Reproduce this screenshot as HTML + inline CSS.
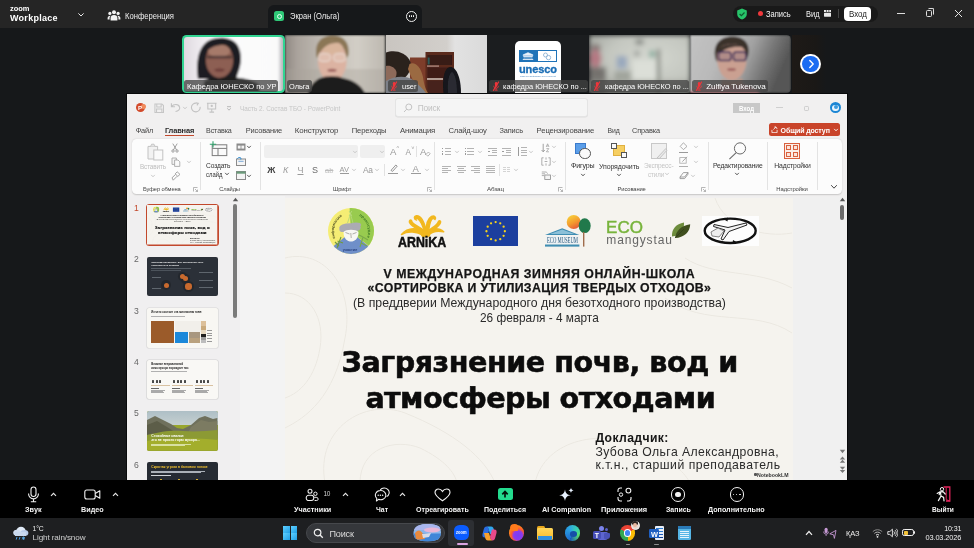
<!DOCTYPE html>
<html lang="ru"><head><meta charset="utf-8"><title>Zoom Workplace</title>
<style>
*{box-sizing:border-box;margin:0;padding:0}
html,body{width:974px;height:548px;overflow:hidden;background:#16181a}
body{position:relative;font-family:"Liberation Sans",sans-serif;color:#fff;font-size:9px}
.t{position:absolute;white-space:nowrap;line-height:1}
.a{position:absolute}
.vid{position:absolute;top:35px;height:58px;overflow:hidden}
.vid i{position:absolute;display:block}
.nm{position:absolute;top:79.5px;height:12.5px;background:rgba(66,66,66,.76);border-radius:2.5px}
#share{position:absolute;left:127px;top:95px;width:720px;height:385px;background:#f1f0f0;overflow:hidden}
#zbar{position:absolute;left:0;top:480px;width:974px;height:37px;background:#000}
#wbar{position:absolute;left:0;top:517px;width:974px;height:31px;background:#1b1f23}
</style></head><body>
<div id="root" style="position:absolute;left:0;top:0;width:974px;height:548px;will-change:transform"><div style="position:absolute;left:0px;top:0px;width:974px;height:28px;background:#252525;"></div>
<div class="t" style="left:10.0px;top:5.0px;font-size:8px;color:#fff;font-weight:bold;transform:scaleX(0.9336);transform-origin:0 50%;">zoom</div>
<div class="t" style="left:10.0px;top:14.0px;font-size:9px;color:#fff;font-weight:bold;letter-spacing:0.268px;">Workplace</div>
<svg style="position:absolute;left:76px;top:11px;" width="10" height="8" viewBox="0 0 10 8"><path d="M2.4 2.4 L5 5 L7.6 2.4" fill="none" stroke="#e8e8e8" stroke-width="1"/></svg>
<svg style="position:absolute;left:107px;top:9px;" width="14" height="13" viewBox="0 0 14 13"><g fill="#f2f2f2"><circle cx="7" cy="3.2" r="2"/><circle cx="2.9" cy="4.4" r="1.6"/><circle cx="11.1" cy="4.4" r="1.6"/><path d="M3.6 11.5 v-2.3 a3.4 3.2 0 0 1 6.8 0 v2.3z"/><path d="M.6 10.6 v-1.6 a2.4 2.4 0 0 1 3-2.2 a4 4 0 0 0-1 3.8z"/><path d="M13.400 10.6 v-1.6 a2.4 2.4 0 0 0-3-2.2 a4 4 0 0 1 1 3.8z"/></g></svg>
<div class="t" style="left:125.0px;top:12.0px;font-size:8.7px;color:#ededed;transform:scaleX(0.8790);transform-origin:0 50%;">Конференция</div>
<div style="position:absolute;left:267.5px;top:4.5px;width:154px;height:23.5px;background:#16181a;border-radius:6px 6px 0 0"></div>
<div style="position:absolute;left:274px;top:11px;width:10px;height:10px;background:#2fc878;border-radius:2.5px"></div>
<div style="position:absolute;left:276.5px;top:13.5px;width:5px;height:5px;background:transparent;border-radius:50%;border:1px solid #e9fff3"></div>
<div class="t" style="left:289.5px;top:12.0px;font-size:8.8px;color:#f0f0f0;transform:scaleX(0.8608);transform-origin:0 50%;">Экран (Ольга)</div>
<div style="position:absolute;left:406px;top:10.5px;width:11px;height:11px;background:transparent;border-radius:50%;border:1.1px solid #f0f0f0"></div>
<div style="position:absolute;left:408.6px;top:15.3px;width:1.4px;height:1.4px;background:#fff;border-radius:50%"></div>
<div style="position:absolute;left:410.8px;top:15.3px;width:1.4px;height:1.4px;background:#fff;border-radius:50%"></div>
<div style="position:absolute;left:413.0px;top:15.3px;width:1.4px;height:1.4px;background:#fff;border-radius:50%"></div>
<div style="position:absolute;left:732.5px;top:5.5px;width:145.5px;height:16px;background:#191919;border-radius:8px"></div>
<svg style="position:absolute;left:735.5px;top:7.5px;" width="12" height="12" viewBox="0 0 12 12"><path d="M6 .6 L10.8 2.4 V6 C10.8 8.8 8.6 10.6 6 11.5 C3.400 10.6 1.2 8.8 1.2 6 V2.4Z" fill="#27c46a"/><path d="M3.600 6 L5.4 7.7 L8.5 4.500" fill="none" stroke="#0f5a30" stroke-width="1.2"/></svg>
<div style="position:absolute;left:758px;top:11px;width:5px;height:5px;background:#f0383c;border-radius:50%"></div>
<div class="t" style="left:765.6px;top:10.0px;font-size:8.7px;color:#f4f4f4;transform:scaleX(0.8687);transform-origin:0 50%;">Запись</div>
<div class="t" style="left:805.5px;top:10.0px;font-size:8.7px;color:#f4f4f4;transform:scaleX(0.8577);transform-origin:0 50%;">Вид</div>
<svg style="position:absolute;left:823.8px;top:9.8px;" width="7.2" height="7.2" viewBox="0 0 8 8"><g fill="#e8e8e8"><rect x="0" y="0" width="2.2" height="2.2"/><rect x="2.9" y="0" width="2.2" height="2.2"/><rect x="5.8" y="0" width="2.2" height="2.2"/><rect x="0" y="3" width="8" height="4.4" rx=".6"/></g></svg>
<div style="position:absolute;left:837.5px;top:9px;width:1px;height:9px;background:#444;"></div>
<div style="position:absolute;left:844px;top:6.5px;width:27px;height:14.5px;background:#fff;border-radius:4px"></div>
<div class="t" style="left:848.6px;top:10.0px;font-size:8.7px;color:#222;transform:scaleX(0.9146);transform-origin:0 50%;">Вход</div>
<div style="position:absolute;left:897px;top:12.5px;width:8px;height:1px;background:#ddd;"></div>
<div style="position:absolute;left:925.5px;top:10px;width:6.5px;height:6.5px;background:transparent;border:1px solid #ddd;border-radius:1.5px"></div>
<div style="position:absolute;left:927.5px;top:8.4px;width:6.5px;height:6.5px;background:transparent;border-top:1px solid #ddd;border-right:1px solid #ddd;border-radius:1.5px"></div>
<svg style="position:absolute;left:954px;top:8.5px;" width="9" height="9" viewBox="0 0 9 9"><path d="M1 1 L8 8 M8 1 L1 8" stroke="#e4e4e4" stroke-width="1"/></svg><div style="position:absolute;left:182px;top:34.6px;width:103px;height:58.6px;background:#31d592;border-radius:4.500px"></div>
<svg style="position:absolute;left:184px;top:36.6px;border-radius:3px;" width="99" height="54.6" viewBox="0 0 99 54.6"><defs><filter id="f1" x="-5%" y="-5%" width="110%" height="110%"><feGaussianBlur stdDeviation="0.8"/></filter></defs><g filter="url(#f1)"><g transform="translate(-2,-2)"><defs><linearGradient id="g1" x1="0" x2="1" y1="0" y2="0"><stop offset="0" stop-color="#ddd7de"/><stop offset=".14" stop-color="#ebe7ec"/><stop offset=".3" stop-color="#f6f4f7"/><stop offset=".55" stop-color="#fbfbfc"/><stop offset=".93" stop-color="#fafafa"/><stop offset=".96" stop-color="#c8c8cc"/><stop offset="1" stop-color="#a8a8ae"/></linearGradient></defs><rect width="103" height="58.600" fill="url(#g1)"/><path d="M16 44 C14 30 15 12 27 5.500 C36 1 50 2 55.500 10 C60.500 18 59.500 30 56 38 L54 44Z" fill="#1f1b20"/><ellipse cx="37.500" cy="25.500" rx="13.600" ry="17.500" fill="#8d5f52"/><ellipse cx="37" cy="16" rx="11" ry="6.500" fill="#a67a6a"/><path d="M23 11 C28 6 44 5 51 12 C45 9 32 9 25 16Z" fill="#1f1b20"/><rect x="25" y="20.800" width="25" height="2.600" fill="#3d2e32" opacity=".75"/><ellipse cx="37.500" cy="35" rx="5" ry="1.500" fill="#6a3a38"/><path d="M20 58.600 L22 46 C28 42.500 48 42 58 43 C68 44.500 75 47 77 50 L78 58.600Z" fill="#1c1a1e"/></g></g></svg>
<div class="nm" style="left:184.4px;width:93.9px"></div><div class="t" style="left:186.8px;top:83.0px;font-size:8.1px;color:#fff;transform:scaleX(0.9289);transform-origin:0 50%;">Кафедра ЮНЕСКО по УР</div>
<svg style="position:absolute;left:285.3px;top:35px;" width="100.3" height="58" viewBox="0 0 100.3 58"><defs><filter id="f2" x="-5%" y="-5%" width="110%" height="110%"><feGaussianBlur stdDeviation="0.8"/></filter></defs><g filter="url(#f2)"><defs><linearGradient id="g2" x1="0" x2="1" y1="0" y2="0"><stop offset="0" stop-color="#8f8882"/><stop offset=".12" stop-color="#aaa39c"/><stop offset=".4" stop-color="#c2bdb5"/><stop offset=".72" stop-color="#d2cec6"/><stop offset="1" stop-color="#bdb8b0"/></linearGradient></defs><rect width="100.300" height="58" fill="url(#g2)"/><rect y="34" width="100.300" height="24" fill="#a9a39b" opacity=".35"/><path d="M31.500 22 C29 8 36 .5 48 .5 C58 .5 65 7 63.500 20 L61 24 L34 24Z" fill="#8b7757"/><ellipse cx="47.300" cy="26" rx="14.300" ry="20.500" fill="#dcb3a2"/><ellipse cx="47" cy="13" rx="11" ry="6" fill="#d9b59c"/><path d="M33 14 C36 5 50 3 58 8 C50 7 40 8 35 18Z" fill="#8b7757"/><rect x="33.500" y="18.500" width="12" height="8" rx="3.600" fill="#e0bfb0" stroke="#eadfd6" stroke-width=".9"/><rect x="48.500" y="18.500" width="12" height="8" rx="3.600" fill="#e0bfb0" stroke="#eadfd6" stroke-width=".9"/><ellipse cx="47" cy="35.300" rx="4.600" ry="1.500" fill="#9c5e5c"/><path d="M23 58 C25 51 29 46 35 43 C40 45 54 45 58 43 C68 45 76 50 80 58Z" fill="#1e1a1a"/><path d="M35 43.500 C38 40.500 56 40.500 58 43.500 L58 47 L35 47Z" fill="#1e1a1a"/></g></svg>
<div class="nm" style="left:286.6px;width:25.8px"></div><div class="t" style="left:289.0px;top:83.0px;font-size:8.1px;color:#fff;transform:scaleX(0.9136);transform-origin:0 50%;">Ольга</div>
<svg style="position:absolute;left:385.6px;top:35px;" width="101.4" height="58" viewBox="0 0 101.4 58"><defs><filter id="f3" x="-5%" y="-5%" width="110%" height="110%"><feGaussianBlur stdDeviation="0.7"/></filter></defs><g filter="url(#f3)"><defs><linearGradient id="g3" x1="0" x2="1" y1="0" y2="0"><stop offset="0" stop-color="#c9c5c0"/><stop offset=".6" stop-color="#d2cfcb"/><stop offset=".68" stop-color="#e2e2e2"/><stop offset="1" stop-color="#dadada"/></linearGradient></defs><rect width="101.400" height="58" fill="url(#g3)"/><rect x="24" y="22.500" width="16" height="36" fill="#7d3c2a"/><rect x="39.500" y="17" width="28.500" height="41" fill="#5a2b1f"/><rect x="41.500" y="20" width="24.500" height="10" fill="#371a14"/><rect x="41.500" y="32.500" width="24.500" height="10.500" fill="#3f1e17"/><rect x="41.500" y="45.500" width="24.500" height="12.500" fill="#46221a"/><rect x="41" y="30.400" width="12" height="1.400" fill="#a8847a"/><rect x="41" y="43.200" width="16" height="1.600" fill="#c8b8b0"/><rect x="41.700" y="22.500" width="2" height="7" fill="#2e5a58"/><path d="M57.500 58 C56 44 58 33 64 32 C70 31.500 75 42 75 58Z" fill="#14151a"/><path d="M62 58 C61 47 63 38 66 37 C69 38 71 47 71 58Z" fill="#2a2c32"/><path d="M0 17.500 C8 14.500 20 16.500 24.500 27 C26 34 22 42 16 44 L0 44Z" fill="#2b211d"/><path d="M0 31 C4 30 9 32 10.500 37 C11 42 8 46 4 47 L0 47Z" fill="#8d6a5a"/><path d="M23.500 29 C29 26 35 32 37 42 C38 50 40 55 42 58 L31 58 C30 50 24 40 22 34Z" fill="#9b6a42"/><path d="M0 46 C8 41 20 40 27 45 C33 50 37 54 40 58 L0 58Z" fill="#7c8088"/></g></svg>
<div class="nm" style="left:387.6px;width:30.5px"></div><svg style="position:absolute;left:390.1px;top:80.7px;" width="8" height="10.5" viewBox="0 0 8 10.5"><path d="M1.200 9.800 L6.800 .6" stroke="#f0343a" stroke-width="1.100" fill="none"/><rect x="2.900" y="1" width="2.400" height="4.800" rx="1.200" fill="#f0343a"/><path d="M1.700 4.800 a2.400 2.400 0 0 0 4.800 0 M4.100 7.200 v1.800 M2.600 9.200 h3" stroke="#f0343a" stroke-width=".8" fill="none"/></svg><div class="t" style="left:401.6px;top:83.0px;font-size:8.1px;color:#fff;transform:scaleX(0.9202);transform-origin:0 50%;">user</div>
<div style="position:absolute;left:487px;top:35px;width:101.5px;height:58px;background:#1b1d1f;"></div>
<div style="position:absolute;left:515.3px;top:41.2px;width:45.5px;height:52px;background:#fff;border-radius:5px 5px 0 0"></div>
<div style="position:absolute;left:519.4px;top:50px;width:18px;height:12px;background:#1f73b8;"></div>
<div style="position:absolute;left:537.4px;top:50px;width:19.4px;height:12px;background:#fff;border:1px solid #1f73b8"></div>
<svg style="position:absolute;left:522.4px;top:52.2px;" width="12" height="8" viewBox="0 0 12 8"><path d="M1 2.800 L6 .6 L11 2.800 V3.600 H1Z M1.600 4.200 H10.400 V5 H1.600Z M2.200 5.400 V6.800 M4 5.400 V6.800 M6 5.400 V6.800 M8 5.400 V6.800 M9.800 5.400 V6.800 M1 7.200 H11 V7.900 H1Z" fill="#e8f1fa" stroke="#e8f1fa" stroke-width=".5"/></svg>
<svg style="position:absolute;left:541px;top:51.8px;" width="12" height="9" viewBox="0 0 12 9"><circle cx="4.500" cy="3" r="2" fill="none" stroke="#8fb3d6" stroke-width=".9"/><circle cx="7.500" cy="5.600" r="2.200" fill="none" stroke="#8fb3d6" stroke-width=".9"/></svg>
<div class="t" style="left:519.0px;top:64.0px;font-size:11px;color:#1a6db5;font-weight:bold;letter-spacing:-0.102px;-webkit-text-stroke:.35px #1a6db5;">unesco</div>
<div class="t" style="left:520.0px;top:75.0px;font-size:2.2px;color:#3a7ab8;letter-spacing:0.059px;">Chair for Sustainable Development</div>
<div class="nm" style="left:489px;width:98.5px"></div><svg style="position:absolute;left:491.5px;top:80.7px;" width="8" height="10.5" viewBox="0 0 8 10.5"><path d="M1.200 9.800 L6.800 .6" stroke="#f0343a" stroke-width="1.100" fill="none"/><rect x="2.900" y="1" width="2.400" height="4.800" rx="1.200" fill="#f0343a"/><path d="M1.700 4.800 a2.400 2.400 0 0 0 4.800 0 M4.100 7.200 v1.800 M2.600 9.200 h3" stroke="#f0343a" stroke-width=".8" fill="none"/></svg><div class="t" style="left:503.0px;top:83.0px;font-size:8.1px;color:#fff;transform:scaleX(0.9174);transform-origin:0 50%;">кафедра ЮНЕСКО по ...</div>
<svg style="position:absolute;left:588.5px;top:35px;" width="101.5" height="58" viewBox="0 0 101.5 58"><defs><filter id="f5" x="-5%" y="-5%" width="110%" height="110%"><feGaussianBlur stdDeviation="2.5"/></filter></defs><g filter="url(#f5)"><defs><radialGradient id="g5" cx=".62" cy=".4" r=".85"><stop offset="0" stop-color="#d4d7d0"/><stop offset=".5" stop-color="#c4c7c0"/><stop offset="1" stop-color="#999c95"/></radialGradient></defs><rect width="101.500" height="58" fill="url(#g5)"/><ellipse cx="6.500" cy="13" rx="5.500" ry="4" fill="#857a78"/><ellipse cx="6.500" cy="23.500" rx="6" ry="9" fill="#b47882"/><rect x="0" y="32" width="17" height="26" fill="#74726e"/><rect x="27.500" y="21" width="10.500" height="12.500" fill="#9aa9bd"/><rect x="25.500" y="36" width="16.500" height="9" fill="#a0a49c"/><rect x="43.500" y="25" width="24.500" height="20" fill="#dcdfd8"/><rect x="46.500" y="4" width="8" height="6" fill="#8c8f8a"/><rect x="45.500" y="16" width="5" height="5" fill="#9a9d98"/><rect x="60.500" y="15.500" width="5.200" height="7" fill="#86ac9c"/><rect x="68" y="14" width="3" height="44" fill="#6d7169"/><rect x="0" y="45" width="101.500" height="13" fill="#9a9d96" opacity=".55"/></g></svg>
<div class="nm" style="left:590.5px;width:98.5px"></div><svg style="position:absolute;left:593.0px;top:80.7px;" width="8" height="10.5" viewBox="0 0 8 10.5"><path d="M1.200 9.800 L6.800 .6" stroke="#f0343a" stroke-width="1.100" fill="none"/><rect x="2.900" y="1" width="2.400" height="4.800" rx="1.200" fill="#f0343a"/><path d="M1.700 4.800 a2.400 2.400 0 0 0 4.800 0 M4.100 7.200 v1.800 M2.600 9.200 h3" stroke="#f0343a" stroke-width=".8" fill="none"/></svg><div class="t" style="left:604.5px;top:83.0px;font-size:8.1px;color:#fff;transform:scaleX(0.9174);transform-origin:0 50%;">кафедра ЮНЕСКО по ...</div>
<svg style="position:absolute;left:690px;top:35px;border-radius:0 4.500px 4.500px 0;" width="101" height="58" viewBox="0 0 101 58"><defs><filter id="f6" x="-5%" y="-5%" width="110%" height="110%"><feGaussianBlur stdDeviation="0.8"/></filter></defs><g filter="url(#f6)"><defs><linearGradient id="g6" x1="0" x2="1" y1="0" y2=".25"><stop offset="0" stop-color="#c3c3c3"/><stop offset=".35" stop-color="#b9b9b9"/><stop offset=".62" stop-color="#a2a2a2"/><stop offset=".82" stop-color="#777"/><stop offset="1" stop-color="#565656"/></linearGradient></defs><rect width="101" height="58" fill="url(#g6)"/><path d="M25.500 24 C22 10 30 1.500 42 1.500 C54 1.500 61 9 58 21 L56 25 L27 27Z" fill="#3a302c"/><path d="M27 22 C27 12 34 9 42 9 C50 9 56.500 13 56.500 23 C57 34 51 45 42 45.500 C33 45 27 35 27 22Z" fill="#caa091"/><path d="M27 16 C31 8 48 7 56 13 C50 10.500 36 11 29 19Z" fill="#3a302c"/><rect x="28.500" y="17" width="12.500" height="8.600" rx="2.600" fill="#b08c88" stroke="#382a58" stroke-width="1.500"/><rect x="43.500" y="17" width="12.500" height="8.600" rx="2.600" fill="#b08c88" stroke="#382a58" stroke-width="1.500"/><ellipse cx="41.500" cy="34.500" rx="4.500" ry="1.300" fill="#9a5a5a"/><path d="M31 58 L32 44 C36 47 48 47 52 43 L53 58Z" fill="#c29684"/><path d="M0 58 L0 56 C10 53 24 51 34 50 C40 52 46 52 52 49 C60 51 66 54 70 58Z" fill="#c98c92"/></g></svg>
<div class="nm" style="left:692.3px;width:75.5px"></div><svg style="position:absolute;left:694.8px;top:80.7px;" width="8" height="10.5" viewBox="0 0 8 10.5"><path d="M1.200 9.800 L6.800 .6" stroke="#f0343a" stroke-width="1.100" fill="none"/><rect x="2.900" y="1" width="2.400" height="4.800" rx="1.200" fill="#f0343a"/><path d="M1.700 4.800 a2.400 2.400 0 0 0 4.800 0 M4.100 7.200 v1.800 M2.600 9.200 h3" stroke="#f0343a" stroke-width=".8" fill="none"/></svg><div class="t" style="left:706.3px;top:83.0px;font-size:8.1px;color:#fff;letter-spacing:-0.116px;">Zulfiya Tukenova</div>
<div style="position:absolute;left:181px;top:92.7px;width:646px;height:1.7px;background:#0b0c0d;"></div>
<div style="position:absolute;left:791.5px;top:35px;width:34px;height:58px;background:linear-gradient(90deg,#1e1a17,#1a1816 70%,#16181a);"></div>
<div style="position:absolute;left:800.3px;top:53.8px;width:20.4px;height:20.4px;background:#fff;border-radius:50%"></div>
<div style="position:absolute;left:802.2px;top:55.7px;width:16.6px;height:16.6px;background:#1b6cf2;border-radius:50%"></div>
<svg style="position:absolute;left:805.5px;top:59px;" width="10" height="10" viewBox="0 0 10 10"><path d="M3.800 1.600 L7.200 5 L3.800 8.400" fill="none" stroke="#fff" stroke-width="1.400" stroke-linecap="round" stroke-linejoin="round"/></svg><div style="position:absolute;left:125.8px;top:93.2px;width:722.5px;height:387px;background:#08090a;"></div>
<div style="position:absolute;left:127px;top:94.3px;width:720.3px;height:386px;background:#f1f0f0;"></div>
<div style="position:absolute;left:136.2px;top:103.2px;width:9px;height:9px;background:#d24a2a;border-radius:50%"></div>
<div style="position:absolute;left:140.5px;top:104.2px;width:5.2px;height:5.2px;background:#f08a5c;border-radius:50%"></div>
<div class="t" style="left:138.0px;top:105.0px;font-size:6px;color:#fff;font-weight:bold;">P</div>
<svg style="position:absolute;left:153.8px;top:102.6px;" width="10.4" height="10.4" viewBox="0 0 9 9"><path d="M.8 .8 H6.800 L8.2 2.2 V8.2 H.8Z M2.4 .8 V3.4 H6.2 V.8 M2.2 8.2 V5.2 H6.8 V8.200" fill="none" stroke="#c6c6c6" stroke-width=".9"/></svg>
<svg style="position:absolute;left:169.8px;top:102.4px;" width="11.5" height="10.35" viewBox="0 0 10 9"><path d="M1.2 1 V4.2 H4.400 M1.4 4 C3 1.600 7.600 1.400 8.4 4.600 C8.8 6.600 7 8 4.8 8.200" fill="none" stroke="#c2c2c2" stroke-width=".95"/></svg>
<svg style="position:absolute;left:181.5px;top:106px;" width="6" height="4" viewBox="0 0 6 4"><path d="M1.2 .9 L3 2.8 L4.8 .9" fill="none" stroke="#c4c4c4" stroke-width=".9"/></svg>
<svg style="position:absolute;left:190.2px;top:102.2px;" width="11.5" height="11.5" viewBox="0 0 10 10"><path d="M5.6 1 A3.8 3.800 0 1 0 8.8 4.200 M5.2 .6 L7.2 1.200 L6 2.900" fill="none" stroke="#c2c2c2" stroke-width=".95"/></svg>
<svg style="position:absolute;left:206px;top:102.2px;" width="11.5" height="11.5" viewBox="0 0 10 10"><path d="M.8 1 H9.2 M1.6 1 V6 H8.400 V1 M5 6 V8.8 M3 8.800 H7" fill="none" stroke="#c2c2c2" stroke-width=".9"/><circle cx="5" cy="3.400" r="1" fill="#c2c2c2"/></svg>
<svg style="position:absolute;left:226px;top:105.5px;" width="6" height="5" viewBox="0 0 6 5"><path d="M1 .7 H5 M1.300 2.300 L3 4.200 L4.700 2.300" fill="none" stroke="#aaa" stroke-width=".8"/></svg>
<div class="t" style="left:239.8px;top:105.0px;font-size:8.1px;color:#c6c6c6;transform:scaleX(0.7890);transform-origin:0 50%;">Часть 2. Состав ТБО  -  PowerPoint</div>
<div style="position:absolute;left:395px;top:98px;width:193px;height:18.5px;background:#f5f5f5;border-radius:3px;border:1px solid #e4e4e4;box-shadow:0 .5px .5px rgba(0,0,0,.08)"></div>
<svg style="position:absolute;left:402.5px;top:102.5px;" width="10" height="10" viewBox="0 0 10 10"><circle cx="5.8" cy="4" r="3" fill="none" stroke="#bdbdbd" stroke-width=".9"/><path d="M3.700 6.200 L1 9" stroke="#bdbdbd" stroke-width=".9"/></svg>
<div class="t" style="left:417.7px;top:104.0px;font-size:8.36px;color:#c2c2c2;letter-spacing:-0.166px;">Поиск</div>
<div style="position:absolute;left:733.3px;top:102.8px;width:26.7px;height:10.2px;background:#c8c8c8;"></div>
<div class="t" style="left:739.0px;top:105.0px;font-size:7.4px;color:#fff;font-weight:bold;transform:scaleX(0.8198);transform-origin:0 50%;">Вход</div>
<div style="position:absolute;left:776px;top:107.1px;width:6.5px;height:0.9px;background:#cfcfcf;"></div>
<div style="position:absolute;left:803.5px;top:105.8px;width:5.5px;height:5.5px;background:#f1f0f0;border:.9px solid #cfcfcf;border-radius:1.2px"></div>
<div style="position:absolute;left:829.8px;top:102.1px;width:11.4px;height:11.4px;background:#1c86d4;border-radius:50%"></div>
<div style="position:absolute;left:832.2px;top:104.5px;width:6.6px;height:6.6px;background:#eaf4fc;border-radius:50%"></div>
<div style="position:absolute;left:834px;top:104.8px;width:4px;height:4px;background:#3a9ade;border-radius:50%"></div>
<div class="t" style="left:135.7px;top:127.0px;font-size:7.37px;color:#444;letter-spacing:-0.173px;">Файл</div>
<div class="t" style="left:206.0px;top:128.0px;font-size:7.15px;color:#444;letter-spacing:-0.129px;">Вставка</div>
<div class="t" style="left:245.7px;top:127.0px;font-size:7.49px;color:#444;letter-spacing:-0.140px;">Рисование</div>
<div class="t" style="left:294.8px;top:127.0px;font-size:7.89px;color:#444;letter-spacing:-0.129px;">Конструктор</div>
<div class="t" style="left:351.8px;top:127.0px;font-size:7.62px;color:#444;letter-spacing:-0.149px;">Переходы</div>
<div class="t" style="left:400.0px;top:127.0px;font-size:7.75px;color:#444;letter-spacing:-0.154px;">Анимация</div>
<div class="t" style="left:448.5px;top:127.0px;font-size:7.61px;color:#444;letter-spacing:-0.144px;">Слайд-шоу</div>
<div class="t" style="left:499.5px;top:127.0px;font-size:7.38px;color:#444;letter-spacing:-0.143px;">Запись</div>
<div class="t" style="left:536.6px;top:127.0px;font-size:7.7px;color:#444;letter-spacing:-0.135px;">Рецензирование</div>
<div class="t" style="left:607.6px;top:128.0px;font-size:6.89px;color:#444;letter-spacing:-0.182px;">Вид</div>
<div class="t" style="left:632.0px;top:127.0px;font-size:7.35px;color:#444;letter-spacing:-0.139px;">Справка</div>
<div class="t" style="left:164.9px;top:127.0px;font-size:7.45px;color:#2a2a2a;font-weight:bold;letter-spacing:-0.150px;">Главная</div>
<div style="position:absolute;left:164.9px;top:135.2px;width:29.4px;height:1.3px;background:#c2482c;"></div>
<div style="position:absolute;left:768.8px;top:123.2px;width:71.2px;height:13.2px;background:#c9442a;border-radius:2.5px"></div>
<svg style="position:absolute;left:771.2px;top:125.8px;" width="7.4" height="7.4" viewBox="0 0 8 8"><path d="M1 4.200 V7.2 H6.6 V4.200 M2.600 3.8 L5.400 1 L6.600 3.200 M5.4 1 L3.600 1.2" fill="none" stroke="#fff" stroke-width=".85"/></svg>
<div class="t" style="left:780.6px;top:127.0px;font-size:7.06px;color:#fff;font-weight:bold;letter-spacing:-0.137px;">Общий доступ</div>
<svg style="position:absolute;left:833.3px;top:128px;" width="6" height="4" viewBox="0 0 6 4"><path d="M1.2 .9 L3 2.8 L4.8 .9" fill="none" stroke="#fff" stroke-width=".9"/></svg>
<div style="position:absolute;left:132.3px;top:138.8px;width:709.5px;height:55.2px;background:#fcfcfc;border-radius:4.5px;box-shadow:0 .5px 1.5px rgba(0,0,0,.18)"></div>
<div style="position:absolute;left:200px;top:142px;width:0.8px;height:48px;background:#e3e3e3;"></div>
<div style="position:absolute;left:259.6px;top:142px;width:0.8px;height:48px;background:#e3e3e3;"></div>
<div style="position:absolute;left:434.2px;top:142px;width:0.8px;height:48px;background:#e3e3e3;"></div>
<div style="position:absolute;left:565px;top:142px;width:0.8px;height:48px;background:#e3e3e3;"></div>
<div style="position:absolute;left:708px;top:142px;width:0.8px;height:48px;background:#e3e3e3;"></div>
<div style="position:absolute;left:767.3px;top:142px;width:0.8px;height:48px;background:#e3e3e3;"></div>
<div style="position:absolute;left:816.7px;top:142px;width:0.8px;height:48px;background:#e3e3e3;"></div>
<svg style="position:absolute;left:146.5px;top:142.5px;" width="17" height="18" viewBox="0 0 17 18"><path d="M1 3.400 H10.600 V16 H1Z" fill="#f2f2f2" stroke="#c2c2c2" stroke-width="1"/><path d="M3.6 3.400 L4.600 1.200 H7 L8 3.400" fill="#e4e4e4" stroke="#c2c2c2" stroke-width=".9"/><rect x="6.800" y="7" width="9" height="10" fill="#fafafa" stroke="#c2c2c2" stroke-width="1"/></svg>
<div class="t" style="left:140.0px;top:164.0px;font-size:6.32px;color:#bdbdbd;letter-spacing:-0.113px;">Вставить</div>
<svg style="position:absolute;left:149.5px;top:173.5px;" width="6" height="4" viewBox="0 0 6 4"><path d="M1.2 .9 L3 2.8 L4.8 .9" fill="none" stroke="#c4c4c4" stroke-width=".9"/></svg>
<svg style="position:absolute;left:171px;top:142.8px;" width="8" height="10" viewBox="0 0 8 10"><path d="M1.8 .6 L5.600 7 M6.200 .6 L2.400 7" stroke="#8a8a8a" stroke-width=".8" fill="none"/><circle cx="2" cy="8" r="1.200" fill="none" stroke="#8a8a8a" stroke-width=".8"/><circle cx="6" cy="8" r="1.200" fill="none" stroke="#8a8a8a" stroke-width=".8"/></svg>
<svg style="position:absolute;left:170.5px;top:156.5px;" width="10" height="10" viewBox="0 0 10 10"><path d="M1 1 H5.400 V7.400 H1Z" fill="#f4f4f4" stroke="#a8a8a8" stroke-width=".9"/><path d="M3.600 3 H7 L8.800 4.800 V9.400 H3.600Z" fill="#fafafa" stroke="#a8a8a8" stroke-width=".9"/></svg>
<svg style="position:absolute;left:185.8px;top:159.8px;" width="6" height="4" viewBox="0 0 6 4"><path d="M1.2 .9 L3 2.8 L4.8 .9" fill="none" stroke="#c4c4c4" stroke-width=".9"/></svg>
<svg style="position:absolute;left:170.5px;top:171px;" width="10" height="10" viewBox="0 0 10 10"><path d="M6.2 .8 L9 3.400 L6.800 5.400 L4.200 2.800Z M4.600 3.400 L1 6.800 L2.200 9.200 L6.200 5.200" fill="none" stroke="#9a9a9a" stroke-width=".9"/></svg>
<div class="t" style="left:143.0px;top:187.0px;font-size:5.73px;color:#444;letter-spacing:-0.103px;">Буфер обмена</div>
<svg style="position:absolute;left:192.5px;top:186.5px;" width="5" height="5" viewBox="0 0 5 5"><path d="M.5 4.500 V.5 H4.500 M2 2 L4.5 4.500 M4.5 2.6 V4.5 H2.600" fill="none" stroke="#999" stroke-width=".7"/></svg>
<svg style="position:absolute;left:208.5px;top:141px;" width="19" height="16" viewBox="0 0 19 16"><rect x="3.200" y="3.800" width="14.6" height="10.800" fill="#fafafa" stroke="#7c7c7c" stroke-width="1"/><path d="M3.200 7.400 H17.800 M9 7.400 V14.600" stroke="#7c7c7c" stroke-width="1" fill="none"/><path d="M4 .2 V6.400 M.8 3.300 H7.200" stroke="#2fa06a" stroke-width="1.1"/></svg>
<div class="t" style="left:206.0px;top:163.0px;font-size:6.61px;color:#333;letter-spacing:-0.120px;">Создать</div>
<div class="t" style="left:206.3px;top:172.0px;font-size:6.6px;color:#333;transform:scaleX(0.8933);transform-origin:0 50%;">слайд</div>
<svg style="position:absolute;left:223.5px;top:172.3px;" width="6" height="4" viewBox="0 0 6 4"><path d="M1.2 .9 L3 2.8 L4.8 .9" fill="none" stroke="#444" stroke-width=".9"/></svg>
<svg style="position:absolute;left:235.5px;top:143px;" width="10" height="8" viewBox="0 0 10 8"><rect x=".5" y=".5" width="9" height="7" fill="#8a8a8a"/><rect x="1.800" y="2.600" width="2.800" height="3" fill="#f4f4f4"/><rect x="5.400" y="2.600" width="2.800" height="3" fill="#f4f4f4"/></svg>
<svg style="position:absolute;left:246.2px;top:145px;" width="6" height="4" viewBox="0 0 6 4"><path d="M1.2 .9 L3 2.8 L4.8 .9" fill="none" stroke="#444" stroke-width=".9"/></svg>
<svg style="position:absolute;left:235.5px;top:156.5px;" width="10" height="9" viewBox="0 0 10 9"><rect x=".5" y="2" width="9" height="6.500" fill="#f4f4f4" stroke="#8a8a8a" stroke-width="1"/><path d="M1.200 1.800 A2.600 2.600 0 0 1 5 1 L4.800 2.600" fill="none" stroke="#2a8ad4" stroke-width=".9"/><rect x="2.400" y="3.800" width="5.200" height="1" fill="#7aa8d8"/></svg>
<svg style="position:absolute;left:235.5px;top:171.2px;" width="10" height="9" viewBox="0 0 10 9"><rect x=".5" y=".5" width="9" height="8" fill="#f4f4f4" stroke="#8a8a8a" stroke-width="1"/><rect x=".5" y=".5" width="9" height="2.200" fill="#6a9a7a"/></svg>
<svg style="position:absolute;left:246.2px;top:173.7px;" width="6" height="4" viewBox="0 0 6 4"><path d="M1.2 .9 L3 2.8 L4.8 .9" fill="none" stroke="#444" stroke-width=".9"/></svg>
<div class="t" style="left:219.3px;top:187.0px;font-size:5.73px;color:#444;letter-spacing:-0.126px;">Слайды</div>
<div style="position:absolute;left:264.2px;top:145px;width:93.8px;height:12.8px;background:#efefef;border-radius:2px"></div>
<svg style="position:absolute;left:352px;top:149.5px;" width="6" height="4" viewBox="0 0 6 4"><path d="M1.2 .9 L3 2.8 L4.8 .9" fill="none" stroke="#c4c4c4" stroke-width=".9"/></svg>
<div style="position:absolute;left:360.4px;top:145px;width:24.9px;height:12.8px;background:#efefef;border-radius:2px"></div>
<svg style="position:absolute;left:379px;top:149.5px;" width="6" height="4" viewBox="0 0 6 4"><path d="M1.2 .9 L3 2.8 L4.8 .9" fill="none" stroke="#c4c4c4" stroke-width=".9"/></svg>
<div class="t" style="left:390.0px;top:147.0px;font-size:9.6px;color:#9a9a9a;">A</div>
<div class="t" style="left:396.5px;top:146.0px;font-size:5.5px;color:#9a9a9a;">^</div>
<div class="t" style="left:405.4px;top:149.0px;font-size:8.2px;color:#9a9a9a;">A</div>
<div class="t" style="left:411.2px;top:146.0px;font-size:5.5px;color:#9a9a9a;">˅</div>
<div style="position:absolute;left:416px;top:146px;width:0.7px;height:11px;background:#e2e2e2;"></div>
<div class="t" style="left:420.0px;top:147.0px;font-size:9.6px;color:#9a9a9a;">A</div>
<svg style="position:absolute;left:425px;top:151px;" width="6" height="6" viewBox="0 0 6 6"><path d="M1 3.400 L3.400 1 L5.200 2.800 L2.800 5.200Z" fill="#fafafa" stroke="#9a9a9a" stroke-width=".7"/></svg>
<div class="t" style="left:267.3px;top:166.0px;font-size:9px;color:#444;font-weight:bold;letter-spacing:-0.134px;">Ж</div>
<div class="t" style="left:283.0px;top:166.0px;font-size:9px;color:#9a9a9a;font-style:italic;">К</div>
<div class="t" style="left:297.5px;top:166.0px;font-size:9px;color:#9a9a9a;text-decoration:underline;">Ч</div>
<div class="t" style="left:312.0px;top:166.0px;font-size:9px;color:#6a6a6a;">S</div>
<div class="t" style="left:325.0px;top:167.0px;font-size:7.5px;color:#bdbdbd;text-decoration:line-through;">ab</div>
<div class="t" style="left:339.5px;top:166.0px;font-size:7.5px;color:#9a9a9a;letter-spacing:0.051px;">AV</div>
<div style="position:absolute;left:339.5px;top:173px;width:9.5px;height:0.8px;background:#9a9a9a;"></div>
<svg style="position:absolute;left:351px;top:168px;" width="6" height="4" viewBox="0 0 6 4"><path d="M1.2 .9 L3 2.8 L4.8 .9" fill="none" stroke="#c4c4c4" stroke-width=".9"/></svg>
<div class="t" style="left:363.0px;top:166.0px;font-size:8.42px;color:#9a9a9a;letter-spacing:-0.299px;">Aa</div>
<svg style="position:absolute;left:374px;top:168px;" width="6" height="4" viewBox="0 0 6 4"><path d="M1.2 .9 L3 2.8 L4.8 .9" fill="none" stroke="#c4c4c4" stroke-width=".9"/></svg>
<div style="position:absolute;left:384.4px;top:164px;width:0.7px;height:12px;background:#e2e2e2;"></div>
<svg style="position:absolute;left:388.5px;top:164px;" width="9" height="8" viewBox="0 0 9 8"><path d="M2 6.400 L6.800 1 L8.200 2.200 L3.600 7.400Z" fill="none" stroke="#8a8a8a" stroke-width=".9"/></svg>
<div style="position:absolute;left:388.2px;top:173px;width:9.5px;height:1.3px;background:#9a9a9a;"></div>
<svg style="position:absolute;left:400.4px;top:168px;" width="6" height="4" viewBox="0 0 6 4"><path d="M1.2 .9 L3 2.8 L4.8 .9" fill="none" stroke="#c4c4c4" stroke-width=".9"/></svg>
<div class="t" style="left:412.5px;top:164.0px;font-size:9.5px;color:#9a9a9a;">A</div>
<div style="position:absolute;left:411.2px;top:173px;width:9.5px;height:1.3px;background:#9a9a9a;"></div>
<svg style="position:absolute;left:423.5px;top:168px;" width="6" height="4" viewBox="0 0 6 4"><path d="M1.2 .9 L3 2.8 L4.8 .9" fill="none" stroke="#c4c4c4" stroke-width=".9"/></svg>
<div class="t" style="left:333.0px;top:187.0px;font-size:5.79px;color:#444;letter-spacing:-0.137px;">Шрифт</div>
<svg style="position:absolute;left:427.2px;top:186.5px;" width="5" height="5" viewBox="0 0 5 5"><path d="M.5 4.500 V.5 H4.500 M2 2 L4.5 4.500 M4.5 2.6 V4.5 H2.600" fill="none" stroke="#999" stroke-width=".7"/></svg>
<div style="position:absolute;left:441.8px;top:147.8px;width:1.3px;height:1.2px;background:#9a9a9a;"></div>
<div style="position:absolute;left:444.6px;top:147.9px;width:6.4px;height:1px;background:#b4b4b4;"></div>
<div style="position:absolute;left:441.8px;top:150.60000000000002px;width:1.3px;height:1.2px;background:#9a9a9a;"></div>
<div style="position:absolute;left:444.6px;top:150.70000000000002px;width:6.4px;height:1px;background:#b4b4b4;"></div>
<div style="position:absolute;left:441.8px;top:153.4px;width:1.3px;height:1.2px;background:#9a9a9a;"></div>
<div style="position:absolute;left:444.6px;top:153.5px;width:6.4px;height:1px;background:#b4b4b4;"></div>
<div style="position:absolute;left:464.5px;top:147.8px;width:1.3px;height:1.2px;background:#9a9a9a;"></div>
<div style="position:absolute;left:467.3px;top:147.9px;width:6.4px;height:1px;background:#b4b4b4;"></div>
<div style="position:absolute;left:464.5px;top:150.60000000000002px;width:1.3px;height:1.2px;background:#9a9a9a;"></div>
<div style="position:absolute;left:467.3px;top:150.70000000000002px;width:6.4px;height:1px;background:#b4b4b4;"></div>
<div style="position:absolute;left:464.5px;top:153.4px;width:1.3px;height:1.2px;background:#9a9a9a;"></div>
<div style="position:absolute;left:467.3px;top:153.5px;width:6.4px;height:1px;background:#b4b4b4;"></div>
<svg style="position:absolute;left:453.8px;top:149.5px;" width="6" height="4" viewBox="0 0 6 4"><path d="M1.2 .9 L3 2.8 L4.8 .9" fill="none" stroke="#c4c4c4" stroke-width=".9"/></svg>
<svg style="position:absolute;left:477px;top:149.5px;" width="6" height="4" viewBox="0 0 6 4"><path d="M1.2 .9 L3 2.8 L4.8 .9" fill="none" stroke="#c4c4c4" stroke-width=".9"/></svg>
<div style="position:absolute;left:487.5px;top:147.5px;width:9px;height:1px;background:#b4b4b4;"></div>
<div style="position:absolute;left:491.5px;top:150px;width:5px;height:1px;background:#b4b4b4;"></div>
<div style="position:absolute;left:491.5px;top:152.2px;width:5px;height:1px;background:#b4b4b4;"></div>
<div style="position:absolute;left:487.5px;top:154.6px;width:9px;height:1px;background:#b4b4b4;"></div>
<div style="position:absolute;left:487.5px;top:150.5px;width:2.5px;height:1.2px;background:#9a9a9a;"></div>
<div style="position:absolute;left:501.8px;top:147.5px;width:9px;height:1px;background:#b4b4b4;"></div>
<div style="position:absolute;left:505.8px;top:150px;width:5px;height:1px;background:#b4b4b4;"></div>
<div style="position:absolute;left:505.8px;top:152.2px;width:5px;height:1px;background:#b4b4b4;"></div>
<div style="position:absolute;left:501.8px;top:154.6px;width:9px;height:1px;background:#b4b4b4;"></div>
<div style="position:absolute;left:501.8px;top:150.5px;width:2.5px;height:1.2px;background:#9a9a9a;"></div>
<div style="position:absolute;left:517.5px;top:146.8px;width:1px;height:9px;background:#9a9a9a;"></div>
<div style="position:absolute;left:520.5px;top:147.3px;width:6px;height:1px;background:#b4b4b4;"></div>
<div style="position:absolute;left:520.5px;top:149.70000000000002px;width:6px;height:1px;background:#b4b4b4;"></div>
<div style="position:absolute;left:520.5px;top:152.10000000000002px;width:6px;height:1px;background:#b4b4b4;"></div>
<div style="position:absolute;left:520.5px;top:154.5px;width:6px;height:1px;background:#b4b4b4;"></div>
<svg style="position:absolute;left:527.7px;top:149.5px;" width="6" height="4" viewBox="0 0 6 4"><path d="M1.2 .9 L3 2.8 L4.8 .9" fill="none" stroke="#c4c4c4" stroke-width=".9"/></svg>
<svg style="position:absolute;left:540.5px;top:142.5px;" width="9" height="10" viewBox="0 0 9 10"><path d="M2.200 .8 V8.600 M.6 7 L2.200 8.800 L3.800 7" fill="none" stroke="#8a8a8a" stroke-width=".8"/><path d="M5.200 4 L6.600 .8 L8 4 M5.800 3 H7.400 M5.400 5.600 H7.800 L5.400 8.800 H8" fill="none" stroke="#9a9a9a" stroke-width=".7"/></svg>
<svg style="position:absolute;left:551.4px;top:145px;" width="6" height="4" viewBox="0 0 6 4"><path d="M1.2 .9 L3 2.8 L4.8 .9" fill="none" stroke="#c4c4c4" stroke-width=".9"/></svg>
<svg style="position:absolute;left:540.5px;top:156.5px;" width="10" height="9" viewBox="0 0 10 9"><path d="M2.600 .8 H.8 V8.200 H2.600 M7.400 .8 H9.200 V8.200 H7.400 M5 .4 V2.600 M5 6.400 V8.600 M3.600 4.500 H6.400" fill="none" stroke="#9a9a9a" stroke-width=".8"/></svg>
<svg style="position:absolute;left:551.4px;top:159.5px;" width="6" height="4" viewBox="0 0 6 4"><path d="M1.2 .9 L3 2.8 L4.8 .9" fill="none" stroke="#c4c4c4" stroke-width=".9"/></svg>
<svg style="position:absolute;left:540.5px;top:171px;" width="10" height="9" viewBox="0 0 10 9"><path d="M.8 1 H5.200 L6.800 2.600 M.8 2.800 H4 M.8 4.600 H3" stroke="#9a9a9a" stroke-width=".8" fill="none"/><rect x="3.800" y="4" width="5.600" height="4.400" fill="#f4f4f4" stroke="#8a8a8a" stroke-width=".8"/></svg>
<svg style="position:absolute;left:551.4px;top:174px;" width="6" height="4" viewBox="0 0 6 4"><path d="M1.2 .9 L3 2.8 L4.8 .9" fill="none" stroke="#c4c4c4" stroke-width=".9"/></svg>
<div style="position:absolute;left:441.8px;top:165.8px;width:9px;height:1px;background:#b4b4b4;"></div><div style="position:absolute;left:441.8px;top:168.0px;width:6px;height:1px;background:#b4b4b4;"></div><div style="position:absolute;left:441.8px;top:170.20000000000002px;width:9px;height:1px;background:#b4b4b4;"></div><div style="position:absolute;left:441.8px;top:172.4px;width:6px;height:1px;background:#b4b4b4;"></div>
<div style="position:absolute;left:456.5px;top:165.8px;width:9px;height:1px;background:#b4b4b4;"></div><div style="position:absolute;left:458.0px;top:168.0px;width:6px;height:1px;background:#b4b4b4;"></div><div style="position:absolute;left:456.5px;top:170.20000000000002px;width:9px;height:1px;background:#b4b4b4;"></div><div style="position:absolute;left:458.0px;top:172.4px;width:6px;height:1px;background:#b4b4b4;"></div>
<div style="position:absolute;left:471.3px;top:165.8px;width:9px;height:1px;background:#b4b4b4;"></div><div style="position:absolute;left:474.3px;top:168.0px;width:6px;height:1px;background:#b4b4b4;"></div><div style="position:absolute;left:471.3px;top:170.20000000000002px;width:9px;height:1px;background:#b4b4b4;"></div><div style="position:absolute;left:474.3px;top:172.4px;width:6px;height:1px;background:#b4b4b4;"></div>
<div style="position:absolute;left:486.1px;top:165.8px;width:9px;height:1px;background:#b4b4b4;"></div><div style="position:absolute;left:486.1px;top:168.0px;width:9px;height:1px;background:#b4b4b4;"></div><div style="position:absolute;left:486.1px;top:170.20000000000002px;width:9px;height:1px;background:#b4b4b4;"></div><div style="position:absolute;left:486.1px;top:172.4px;width:9px;height:1px;background:#b4b4b4;"></div>
<div style="position:absolute;left:498.6px;top:164px;width:0.7px;height:12px;background:#e2e2e2;"></div>
<div style="position:absolute;left:502.5px;top:166.5px;width:3.4px;height:1px;background:#d4d4d4;"></div>
<div style="position:absolute;left:507px;top:166.5px;width:3.4px;height:1px;background:#d4d4d4;"></div>
<div style="position:absolute;left:502.5px;top:168.9px;width:3.4px;height:1px;background:#d4d4d4;"></div>
<div style="position:absolute;left:507px;top:168.9px;width:3.4px;height:1px;background:#d4d4d4;"></div>
<div style="position:absolute;left:502.5px;top:171.3px;width:3.4px;height:1px;background:#d4d4d4;"></div>
<div style="position:absolute;left:507px;top:171.3px;width:3.4px;height:1px;background:#d4d4d4;"></div>
<svg style="position:absolute;left:512.6px;top:168px;" width="6" height="4" viewBox="0 0 6 4"><path d="M1.2 .9 L3 2.8 L4.8 .9" fill="none" stroke="#c4c4c4" stroke-width=".9"/></svg>
<div class="t" style="left:487.0px;top:186.0px;font-size:6.24px;color:#444;letter-spacing:-0.126px;">Абзац</div>
<svg style="position:absolute;left:558.0px;top:186.5px;" width="5" height="5" viewBox="0 0 5 5"><path d="M.5 4.500 V.5 H4.500 M2 2 L4.5 4.500 M4.5 2.6 V4.5 H2.600" fill="none" stroke="#999" stroke-width=".7"/></svg>
<div style="position:absolute;left:574.7px;top:143.4px;width:11px;height:10.2px;background:#5b9ee8;border:.8px solid #3a7acc"></div>
<div style="position:absolute;left:579.4px;top:147.6px;width:11.4px;height:11.4px;background:#fafafa;border-radius:50%;border:1px solid #555"></div>
<div class="t" style="left:571.0px;top:163.0px;font-size:7.08px;color:#333;letter-spacing:-0.141px;">Фигуры</div>
<svg style="position:absolute;left:579.5px;top:172.5px;" width="6" height="4" viewBox="0 0 6 4"><path d="M1.2 .9 L3 2.8 L4.8 .9" fill="none" stroke="#444" stroke-width=".9"/></svg>
<div style="position:absolute;left:613px;top:145px;width:11.6px;height:11px;background:#f6cf62;border:.8px solid #e0b040"></div>
<div style="position:absolute;left:611px;top:143px;width:6px;height:6px;background:#fafafa;border:.9px solid #555"></div>
<div style="position:absolute;left:621px;top:152px;width:6px;height:6px;background:#fafafa;border:.9px solid #555"></div>
<div class="t" style="left:599.0px;top:163.0px;font-size:6.99px;color:#333;letter-spacing:-0.120px;">Упорядочить</div>
<svg style="position:absolute;left:616px;top:172.5px;" width="6" height="4" viewBox="0 0 6 4"><path d="M1.2 .9 L3 2.8 L4.8 .9" fill="none" stroke="#444" stroke-width=".9"/></svg>
<div style="position:absolute;left:650.5px;top:143px;width:16.2px;height:16px;background:#f0f0f0;border:1px solid #c8c8c8"></div>
<svg style="position:absolute;left:655px;top:147px;" width="14" height="13" viewBox="0 0 14 13"><path d="M2 11 L10.800 1.600 L12 3.200 L4.400 11.600Z" fill="#e8e8e8" stroke="#c0c0c0" stroke-width=".9"/></svg>
<div class="t" style="left:644.0px;top:163.0px;font-size:6.55px;color:#c4c4c4;letter-spacing:-0.111px;">Экспресс-</div>
<div class="t" style="left:648.0px;top:172.0px;font-size:6.55px;color:#c4c4c4;transform:scaleX(0.9360);transform-origin:0 50%;">стили</div>
<svg style="position:absolute;left:664px;top:172.3px;" width="6" height="4" viewBox="0 0 6 4"><path d="M1.2 .9 L3 2.8 L4.8 .9" fill="none" stroke="#c4c4c4" stroke-width=".9"/></svg>
<svg style="position:absolute;left:679px;top:142px;" width="9" height="9" viewBox="0 0 9 9"><path d="M4.400 .8 L8 4.400 L4.400 7.600 L1.200 4.400Z" fill="none" stroke="#9a9a9a" stroke-width=".8"/></svg>
<div style="position:absolute;left:679px;top:151.5px;width:9px;height:1.2px;background:#9a9a9a;"></div>
<svg style="position:absolute;left:693.3px;top:145px;" width="6" height="4" viewBox="0 0 6 4"><path d="M1.2 .9 L3 2.8 L4.8 .9" fill="none" stroke="#c4c4c4" stroke-width=".9"/></svg>
<svg style="position:absolute;left:679px;top:156px;" width="9" height="9" viewBox="0 0 9 9"><rect x=".8" y="1.600" width="6.400" height="5.600" fill="none" stroke="#aaa" stroke-width=".8"/><path d="M3.400 5.600 L8 .8" stroke="#9a9a9a" stroke-width=".9"/></svg>
<div style="position:absolute;left:679px;top:165.5px;width:9px;height:1.2px;background:#b0b0b0;"></div>
<svg style="position:absolute;left:693.3px;top:159.5px;" width="6" height="4" viewBox="0 0 6 4"><path d="M1.2 .9 L3 2.8 L4.8 .9" fill="none" stroke="#c4c4c4" stroke-width=".9"/></svg>
<svg style="position:absolute;left:679px;top:171px;" width="10" height="9" viewBox="0 0 10 9"><path d="M1 6 L4.400 1.600 H9 L5.600 6Z M1 6 V7.600 H5.600 L9 3.200 V1.600" fill="none" stroke="#8a8a8a" stroke-width=".8"/></svg>
<svg style="position:absolute;left:689.6px;top:174px;" width="6" height="4" viewBox="0 0 6 4"><path d="M1.2 .9 L3 2.8 L4.8 .9" fill="none" stroke="#c4c4c4" stroke-width=".9"/></svg>
<div class="t" style="left:617.6px;top:187.0px;font-size:5.77px;color:#444;letter-spacing:-0.107px;">Рисование</div>
<svg style="position:absolute;left:700.5px;top:186.5px;" width="5" height="5" viewBox="0 0 5 5"><path d="M.5 4.500 V.5 H4.500 M2 2 L4.5 4.500 M4.5 2.6 V4.5 H2.600" fill="none" stroke="#999" stroke-width=".7"/></svg>
<svg style="position:absolute;left:727px;top:140.5px;" width="21" height="20" viewBox="0 0 21 20"><circle cx="13" cy="7.400" r="5.600" fill="none" stroke="#6a6a6a" stroke-width="1"/><path d="M9.200 11.600 L2.400 18.200" stroke="#6a6a6a" stroke-width="1.100"/></svg>
<div class="t" style="left:713.0px;top:163.0px;font-size:6.73px;color:#333;letter-spacing:-0.113px;">Редактирование</div>
<svg style="position:absolute;left:734px;top:171.5px;" width="6" height="4" viewBox="0 0 6 4"><path d="M1.2 .9 L3 2.8 L4.8 .9" fill="none" stroke="#444" stroke-width=".9"/></svg>
<div style="position:absolute;left:784px;top:143px;width:16.4px;height:15.8px;background:#fbeee8;border:1.1px solid #d9613f"></div>
<div style="position:absolute;left:786.4px;top:145.3px;width:4.8px;height:4.6px;background:#fbe3da;border:1px solid #d9613f"></div>
<div style="position:absolute;left:793.3px;top:145.3px;width:4.8px;height:4.6px;background:#fbe3da;border:1px solid #d9613f"></div>
<div style="position:absolute;left:786.4px;top:152px;width:4.8px;height:4.6px;background:#fbe3da;border:1px solid #d9613f"></div>
<div style="position:absolute;left:793.3px;top:152px;width:4.8px;height:4.6px;background:#fbe3da;border:1px solid #d9613f"></div>
<div class="t" style="left:774.3px;top:163.0px;font-size:6.85px;color:#333;letter-spacing:-0.121px;">Надстройки</div>
<div class="t" style="left:776.3px;top:187.0px;font-size:5.91px;color:#444;letter-spacing:-0.103px;">Надстройки</div>
<svg style="position:absolute;left:830px;top:184px;" width="8" height="6" viewBox="0 0 8 6"><path d="M1.200 1.200 L4 4.200 L6.800 1.200" fill="none" stroke="#444" stroke-width="1"/></svg><div style="position:absolute;left:793px;top:197px;width:54.3px;height:283px;background:#f0f0f0;"></div>
<div style="position:absolute;left:127px;top:196px;width:113px;height:284px;background:#f0eff0;"></div>
<div style="position:absolute;left:240px;top:196px;width:45.3px;height:284px;background:#f3f3f3;"></div>
<div style="position:absolute;left:285.3px;top:197.7px;width:507.3px;height:285.4px;background:#f5f3ee;overflow:hidden"><svg style="position:absolute;left:0;top:0" width="507.3" height="285.4" viewBox="0 0 507.3 285.4"><g fill="none" stroke="#ebe8e1" stroke-width="1"><path d="M0 60 C40 50 70 90 60 140 C50 200 20 220 0 230"/><path d="M0 95 C25 95 40 120 35 150 C30 180 15 195 0 200"/><path d="M40 285 C30 230 80 200 120 215 C170 235 200 260 210 285"/><path d="M75 285 C75 250 110 240 135 250 C160 262 170 275 172 285"/><path d="M400 60 C430 80 470 70 507 90"/><path d="M380 100 C420 130 470 110 507 135"/><path d="M430 0 C440 30 480 40 507 35"/><path d="M250 285 C260 240 320 230 360 250 C390 265 400 275 405 285"/></g></svg>
<svg style="position:absolute;left:43.0px;top:10.4px" width="46" height="46" viewBox="-23 -23 46 46"><defs><clipPath id="lca"><circle r="23"/></clipPath></defs><g clip-path="url(#lca)"><rect x="-24" y="-24" width="48" height="48" fill="#f5ed74"/><path d="M-1.500 -24 L0 1 L30 24 L30 -24Z" fill="#98cb4f"/><path d="M0 1 L-30 25 L30 25Z" fill="#6f8fc9"/><ellipse cx="-1" cy="-3.200" rx="10.800" ry="4.600" fill="#ababb3"/><ellipse cx="5" cy="-6" rx="5" ry="2.400" fill="#ababb3"/><ellipse cx="-8" cy="-1.500" rx="3.600" ry="2.600" fill="#ababb3"/><path d="M-7.500 1 C-7.500 8 -3.500 10.500 0 10.500 C3.500 10.500 7.500 8 7.500 1 C5 -2 -5 -2 -7.500 1Z" fill="#f7f7f3"/><path d="M-.8 2 L-.3 7 L.8 7 L.3 2Z" fill="#b8b8b0"/><path d="M-5.500 1.500 L-1.500 3 M5.500 1.500 L1.500 3" stroke="#9a9a94" stroke-width=".8"/><path d="M-14 17 L-10 6 M-13.500 10 L-8 12 M-12 15 L-16 11" stroke="#6f9a3c" stroke-width="1.100" fill="none"/><path d="M9 16 L12 6 L17 9 M10 12 L16 15 M12 6 L8 4" stroke="#7aa84a" stroke-width="1.100" fill="none"/><path d="M-3.500 -8 L-.5 -17 L2 -8 M-1.800 -20 L.8 -15 M.8 -20 L-1.800 -15" stroke="#b4d878" stroke-width=".9" fill="none"/></g><path id="lp1a" d="M-15.600 7.300 A17.200 17.200 0 0 1 -8.100 -15.200" fill="none"/><path id="lp2a" d="M8.100 -15.200 A17.200 17.200 0 0 1 15.600 7.300" fill="none"/><text font-family="Liberation Sans,sans-serif" font-size="3.600" font-weight="bold" fill="#4f4f22"><textPath href="#lp1a" textLength="25" lengthAdjust="spacingAndGlyphs">информация</textPath></text><text font-family="Liberation Sans,sans-serif" font-size="3.600" font-weight="bold" fill="#3f7a24"><textPath href="#lp2a" textLength="25" lengthAdjust="spacingAndGlyphs">правосудие</textPath></text><text x="-8.300" y="19.600" font-family="Liberation Sans,sans-serif" font-size="3.800" font-weight="bold" fill="#27407e" textLength="14.500" lengthAdjust="spacingAndGlyphs">участие</text></svg>
<svg style="position:absolute;left:114.7px;top:16.3px" width="45" height="24" viewBox="0 0 45 24"><g fill="#f2b81f" stroke="#f2b81f" stroke-width="1.500" stroke-linejoin="round"><path d="M25 19.500 C19 13.500 8 12.500 1.500 20.500 C8 16.500 17 17.500 23.500 21.500Z"/><path d="M26.500 19.500 C31 13.500 39 13.500 43.700 17.800 C38 16.500 32 17.500 28 21.500Z"/><path d="M24 19 C19 15 12 13.500 9.500 8.500 C9 6.500 10.500 5.500 11.500 6.500 C11.500 10.500 19 12 25 17.500Z"/><path d="M27 18.500 C30 14 37 12.500 38.500 7.500 C39.500 6 41 7 40.500 8.500 C39.500 13 32 15.500 28.500 19.500Z"/><path d="M24.500 18.500 C23 12 21 7 17.500 4.500 C16 3.500 15 5 16.500 6 C14 5.500 13.500 2.500 16.500 1.800 C21 1.500 24.500 9 26.500 17.500Z"/><path d="M26.500 18 C26 11 27.500 5 31.500 2.500 C34.500 1.200 36.500 3.500 35 5.500 C34.500 4 32.500 4 31.500 5.500 C29.500 8.500 29 13 28.500 18.500Z"/><ellipse cx="25.600" cy="20.500" rx="4" ry="2.100"/></g></svg>
<div class="t" style="left:112.5px;top:37.0px;font-size:14.8px;color:#111;font-weight:bold;transform:scaleX(0.8375);transform-origin:0 50%;-webkit-text-stroke:.5px #111;">ARNiKA</div>
<div style="position:absolute;left:187.4px;top:18.1px;width:45.3px;height:30.5px;background:#1c3f9e;"></div>
<svg style="position:absolute;left:187.4px;top:18.1px" width="45.3" height="30.5" viewBox="0 0 45.3 30.5"><circle cx="22.65" cy="6.05" r="1.15" fill="#f7d41c"/><circle cx="27.25" cy="7.28" r="1.15" fill="#f7d41c"/><circle cx="30.62" cy="10.65" r="1.15" fill="#f7d41c"/><circle cx="31.85" cy="15.25" r="1.15" fill="#f7d41c"/><circle cx="30.62" cy="19.85" r="1.15" fill="#f7d41c"/><circle cx="27.25" cy="23.22" r="1.15" fill="#f7d41c"/><circle cx="22.65" cy="24.45" r="1.15" fill="#f7d41c"/><circle cx="18.05" cy="23.22" r="1.15" fill="#f7d41c"/><circle cx="14.68" cy="19.85" r="1.15" fill="#f7d41c"/><circle cx="13.45" cy="15.25" r="1.15" fill="#f7d41c"/><circle cx="14.68" cy="10.65" r="1.15" fill="#f7d41c"/><circle cx="18.05" cy="7.28" r="1.15" fill="#f7d41c"/></svg>
<svg style="position:absolute;left:258.7px;top:16.3px" width="50" height="34" viewBox="0 0 50 34"><defs><linearGradient id="suna" x1=".2" y1="0" x2=".7" y2="1"><stop offset="0" stop-color="#f8d23a"/><stop offset=".55" stop-color="#f39a2e"/><stop offset="1" stop-color="#e4573a"/></linearGradient></defs><circle cx="29.700" cy="8" r="7" fill="url(#suna)"/><ellipse cx="40.700" cy="11.700" rx="6" ry="7.400" fill="#21794b"/><rect x="39" y="18" width="1.400" height="14.600" fill="#a06c4c"/><path d="M1 21 L18.200 14.300 L35.400 21Z" fill="#3f8db2"/><path d="M6 20 L18.200 15.600 L30.400 20Z" fill="#8cc0d8"/><rect x="2" y="21.800" width="32.500" height="8.400" fill="#eef2f4"/><text x="3" y="29.200" font-family="Liberation Serif,serif" font-size="8.600" fill="#23557a" textLength="31" lengthAdjust="spacingAndGlyphs">ECO MUSEUM</text><rect x="1" y="30.500" width="34.400" height="2.100" fill="#3f8db2"/></svg>
<div class="t" style="left:320.7px;top:21.0px;font-size:17px;color:#78b43c;letter-spacing:0.080px;-webkit-text-stroke:.45px #78b43c;">ECO</div>
<div class="t" style="left:321.0px;top:36.0px;font-size:12px;color:#666;letter-spacing:0.862px;">mangystau</div>
<svg style="position:absolute;left:385.7px;top:23.3px" width="20" height="18" viewBox="0 0 20 18"><path d="M1 15.500 C.5 8 5 3 13 1.500 C13.500 9 9 15 1 15.500Z" fill="#6d8c3c"/><path d="M4 17 C5 10 10 4.500 19.200 3.200 C19 11 13 16.500 4 17Z" fill="#3f4f1e"/><path d="M4 17 L13 8" stroke="#2c3814" stroke-width=".6"/></svg>
<div style="position:absolute;left:417.2px;top:18.7px;width:56.5px;height:29.6px;background:#fdfdfd;"></div>
<svg style="position:absolute;left:417.2px;top:18.7px" width="56.5" height="29.6" viewBox="0 0 56.5 29.6"><ellipse cx="28.200" cy="14.800" rx="25.500" ry="12.200" fill="none" stroke="#111" stroke-width="2.400"/><path d="M12 8.500 L26 11.500 L44 7 L45 9 L27 15.500 L21 24 L19 23 L23 14 L11.500 10.500Z" fill="#f4f4f4" stroke="#222" stroke-width="1"/><path d="M9 16 L16 12 L22 15 L17 21 L10 20Z" fill="#eee" stroke="#555" stroke-width=".7"/><path d="M22 3.500 L26 1.500 L25.500 5.500Z M34.500 26 L30.500 28 L31 24Z" fill="#111"/></svg>
<div class="t" style="left:98.3px;top:70.0px;font-size:12.3px;color:#151515;font-weight:bold;letter-spacing:0.531px;-webkit-text-stroke:.25px #151515;">V МЕЖДУНАРОДНАЯ ЗИМНЯЯ ОНЛАЙН-ШКОЛА</div>
<div class="t" style="left:82.3px;top:84.0px;font-size:12.3px;color:#151515;font-weight:bold;letter-spacing:0.361px;-webkit-text-stroke:.25px #151515;">«СОРТИРОВКА И УТИЛИЗАЦИЯ ТВЕРДЫХ ОТХОДОВ»</div>
<div class="t" style="left:68.1px;top:99.0px;font-size:12.9px;color:#2a2a2a;transform:scaleX(0.9525);transform-origin:0 50%;">(В преддверии Международного дня безотходного производства)</div>
<div class="t" style="left:194.9px;top:114.0px;font-size:12.9px;color:#2a2a2a;transform:scaleX(0.9172);transform-origin:0 50%;">26 февраля - 4 марта</div>
<div class="t" style="left:56.3px;top:150.0px;font-size:28.6px;color:#0c0c0c;font-weight:bold;font-family:'DejaVu Sans',sans-serif;letter-spacing:-0.470px;-webkit-text-stroke:.55px #0c0c0c;">Загрязнение почв, вод и</div>
<div class="t" style="left:80.1px;top:186.0px;font-size:28.6px;color:#0c0c0c;font-weight:bold;font-family:'DejaVu Sans',sans-serif;letter-spacing:-0.569px;-webkit-text-stroke:.55px #0c0c0c;">атмосферы отходами</div>
<div class="t" style="left:310.1px;top:234.0px;font-size:12.2px;color:#151515;font-weight:bold;letter-spacing:0.380px;">Докладчик:</div>
<div class="t" style="left:310.1px;top:248.0px;font-size:12.2px;color:#2a2a2a;letter-spacing:0.427px;">Зубова Ольга Александровна,</div>
<div class="t" style="left:310.1px;top:261.0px;font-size:12.2px;color:#2a2a2a;letter-spacing:0.509px;">к.т.н., старший преподаватель</div>
<div class="t" style="left:472.2px;top:276.0px;font-size:4.6px;color:#333;font-weight:bold;transform:scaleX(1.1310);transform-origin:0 50%;">NotebookLM</div>
<div style="position:absolute;left:468.7px;top:275.3px;width:2.6px;height:3.2px;background:#555;border-radius:1px"></div></div>
<div class="t" style="left:134.0px;top:204.0px;font-size:8.6px;color:#c2482c;">1</div>
<div class="t" style="left:134.0px;top:255.0px;font-size:8.6px;color:#666;">2</div>
<div class="t" style="left:134.0px;top:307.0px;font-size:8.6px;color:#666;">3</div>
<div class="t" style="left:134.0px;top:358.0px;font-size:8.6px;color:#666;">4</div>
<div class="t" style="left:134.0px;top:409.0px;font-size:8.6px;color:#666;">5</div>
<div class="t" style="left:134.0px;top:461.0px;font-size:8.6px;color:#666;">6</div>
<div style="position:absolute;left:145.6px;top:203.7px;width:73.6px;height:42.7px;background:#f5f3ee;border:2px solid #c2482c;border-radius:3.5px"></div>
<div style="position:absolute;left:147.3px;top:205.3px;width:507.3px;height:285.4px;transform:scale(0.13858);transform-origin:0 0;overflow:hidden;background:#f5f3ee"><svg style="position:absolute;left:0;top:0" width="507.3" height="285.4" viewBox="0 0 507.3 285.4"><g fill="none" stroke="#ebe8e1" stroke-width="1"><path d="M0 60 C40 50 70 90 60 140 C50 200 20 220 0 230"/><path d="M0 95 C25 95 40 120 35 150 C30 180 15 195 0 200"/><path d="M40 285 C30 230 80 200 120 215 C170 235 200 260 210 285"/><path d="M75 285 C75 250 110 240 135 250 C160 262 170 275 172 285"/><path d="M400 60 C430 80 470 70 507 90"/><path d="M380 100 C420 130 470 110 507 135"/><path d="M430 0 C440 30 480 40 507 35"/><path d="M250 285 C260 240 320 230 360 250 C390 265 400 275 405 285"/></g></svg>
<svg style="position:absolute;left:43.0px;top:10.4px" width="46" height="46" viewBox="-23 -23 46 46"><defs><clipPath id="lcb"><circle r="23"/></clipPath></defs><g clip-path="url(#lcb)"><rect x="-24" y="-24" width="48" height="48" fill="#f5ed74"/><path d="M-1.500 -24 L0 1 L30 24 L30 -24Z" fill="#98cb4f"/><path d="M0 1 L-30 25 L30 25Z" fill="#6f8fc9"/><ellipse cx="-1" cy="-3.200" rx="10.800" ry="4.600" fill="#ababb3"/><ellipse cx="5" cy="-6" rx="5" ry="2.400" fill="#ababb3"/><ellipse cx="-8" cy="-1.500" rx="3.600" ry="2.600" fill="#ababb3"/><path d="M-7.500 1 C-7.500 8 -3.500 10.500 0 10.500 C3.500 10.500 7.500 8 7.500 1 C5 -2 -5 -2 -7.500 1Z" fill="#f7f7f3"/><path d="M-.8 2 L-.3 7 L.8 7 L.3 2Z" fill="#b8b8b0"/><path d="M-5.500 1.500 L-1.500 3 M5.500 1.500 L1.500 3" stroke="#9a9a94" stroke-width=".8"/><path d="M-14 17 L-10 6 M-13.500 10 L-8 12 M-12 15 L-16 11" stroke="#6f9a3c" stroke-width="1.100" fill="none"/><path d="M9 16 L12 6 L17 9 M10 12 L16 15 M12 6 L8 4" stroke="#7aa84a" stroke-width="1.100" fill="none"/><path d="M-3.500 -8 L-.5 -17 L2 -8 M-1.800 -20 L.8 -15 M.8 -20 L-1.800 -15" stroke="#b4d878" stroke-width=".9" fill="none"/></g><path id="lp1b" d="M-15.600 7.300 A17.200 17.200 0 0 1 -8.100 -15.200" fill="none"/><path id="lp2b" d="M8.100 -15.200 A17.200 17.200 0 0 1 15.600 7.300" fill="none"/><text font-family="Liberation Sans,sans-serif" font-size="3.600" font-weight="bold" fill="#4f4f22"><textPath href="#lp1b" textLength="25" lengthAdjust="spacingAndGlyphs">информация</textPath></text><text font-family="Liberation Sans,sans-serif" font-size="3.600" font-weight="bold" fill="#3f7a24"><textPath href="#lp2b" textLength="25" lengthAdjust="spacingAndGlyphs">правосудие</textPath></text><text x="-8.300" y="19.600" font-family="Liberation Sans,sans-serif" font-size="3.800" font-weight="bold" fill="#27407e" textLength="14.500" lengthAdjust="spacingAndGlyphs">участие</text></svg>
<svg style="position:absolute;left:114.7px;top:16.3px" width="45" height="24" viewBox="0 0 45 24"><g fill="#f2b81f" stroke="#f2b81f" stroke-width="1.500" stroke-linejoin="round"><path d="M25 19.500 C19 13.500 8 12.500 1.500 20.500 C8 16.500 17 17.500 23.500 21.500Z"/><path d="M26.500 19.500 C31 13.500 39 13.500 43.700 17.800 C38 16.500 32 17.500 28 21.500Z"/><path d="M24 19 C19 15 12 13.500 9.500 8.500 C9 6.500 10.500 5.500 11.500 6.500 C11.500 10.500 19 12 25 17.500Z"/><path d="M27 18.500 C30 14 37 12.500 38.500 7.500 C39.500 6 41 7 40.500 8.500 C39.500 13 32 15.500 28.500 19.500Z"/><path d="M24.500 18.500 C23 12 21 7 17.500 4.500 C16 3.500 15 5 16.500 6 C14 5.500 13.500 2.500 16.500 1.800 C21 1.500 24.500 9 26.500 17.500Z"/><path d="M26.500 18 C26 11 27.500 5 31.500 2.500 C34.500 1.200 36.500 3.500 35 5.500 C34.500 4 32.500 4 31.500 5.500 C29.500 8.500 29 13 28.500 18.500Z"/><ellipse cx="25.600" cy="20.500" rx="4" ry="2.100"/></g></svg>
<div class="t" style="left:112.5px;top:37.0px;font-size:14.8px;color:#111;font-weight:bold;transform:scaleX(0.8375);transform-origin:0 50%;-webkit-text-stroke:.5px #111;">ARNiKA</div>
<div style="position:absolute;left:187.4px;top:18.1px;width:45.3px;height:30.5px;background:#1c3f9e;"></div>
<svg style="position:absolute;left:187.4px;top:18.1px" width="45.3" height="30.5" viewBox="0 0 45.3 30.5"><circle cx="22.65" cy="6.05" r="1.15" fill="#f7d41c"/><circle cx="27.25" cy="7.28" r="1.15" fill="#f7d41c"/><circle cx="30.62" cy="10.65" r="1.15" fill="#f7d41c"/><circle cx="31.85" cy="15.25" r="1.15" fill="#f7d41c"/><circle cx="30.62" cy="19.85" r="1.15" fill="#f7d41c"/><circle cx="27.25" cy="23.22" r="1.15" fill="#f7d41c"/><circle cx="22.65" cy="24.45" r="1.15" fill="#f7d41c"/><circle cx="18.05" cy="23.22" r="1.15" fill="#f7d41c"/><circle cx="14.68" cy="19.85" r="1.15" fill="#f7d41c"/><circle cx="13.45" cy="15.25" r="1.15" fill="#f7d41c"/><circle cx="14.68" cy="10.65" r="1.15" fill="#f7d41c"/><circle cx="18.05" cy="7.28" r="1.15" fill="#f7d41c"/></svg>
<svg style="position:absolute;left:258.7px;top:16.3px" width="50" height="34" viewBox="0 0 50 34"><defs><linearGradient id="sunb" x1=".2" y1="0" x2=".7" y2="1"><stop offset="0" stop-color="#f8d23a"/><stop offset=".55" stop-color="#f39a2e"/><stop offset="1" stop-color="#e4573a"/></linearGradient></defs><circle cx="29.700" cy="8" r="7" fill="url(#sunb)"/><ellipse cx="40.700" cy="11.700" rx="6" ry="7.400" fill="#21794b"/><rect x="39" y="18" width="1.400" height="14.600" fill="#a06c4c"/><path d="M1 21 L18.200 14.300 L35.400 21Z" fill="#3f8db2"/><path d="M6 20 L18.200 15.600 L30.400 20Z" fill="#8cc0d8"/><rect x="2" y="21.800" width="32.500" height="8.400" fill="#eef2f4"/><text x="3" y="29.200" font-family="Liberation Serif,serif" font-size="8.600" fill="#23557a" textLength="31" lengthAdjust="spacingAndGlyphs">ECO MUSEUM</text><rect x="1" y="30.500" width="34.400" height="2.100" fill="#3f8db2"/></svg>
<div class="t" style="left:320.7px;top:21.0px;font-size:17px;color:#78b43c;letter-spacing:0.080px;-webkit-text-stroke:.45px #78b43c;">ECO</div>
<div class="t" style="left:321.0px;top:36.0px;font-size:12px;color:#666;letter-spacing:0.862px;">mangystau</div>
<svg style="position:absolute;left:385.7px;top:23.3px" width="20" height="18" viewBox="0 0 20 18"><path d="M1 15.500 C.5 8 5 3 13 1.500 C13.500 9 9 15 1 15.500Z" fill="#6d8c3c"/><path d="M4 17 C5 10 10 4.500 19.200 3.200 C19 11 13 16.500 4 17Z" fill="#3f4f1e"/><path d="M4 17 L13 8" stroke="#2c3814" stroke-width=".6"/></svg>
<div style="position:absolute;left:417.2px;top:18.7px;width:56.5px;height:29.6px;background:#fdfdfd;"></div>
<svg style="position:absolute;left:417.2px;top:18.7px" width="56.5" height="29.6" viewBox="0 0 56.5 29.6"><ellipse cx="28.200" cy="14.800" rx="25.500" ry="12.200" fill="none" stroke="#111" stroke-width="2.400"/><path d="M12 8.500 L26 11.500 L44 7 L45 9 L27 15.500 L21 24 L19 23 L23 14 L11.500 10.500Z" fill="#f4f4f4" stroke="#222" stroke-width="1"/><path d="M9 16 L16 12 L22 15 L17 21 L10 20Z" fill="#eee" stroke="#555" stroke-width=".7"/><path d="M22 3.500 L26 1.500 L25.500 5.500Z M34.500 26 L30.500 28 L31 24Z" fill="#111"/></svg>
<div class="t" style="left:98.3px;top:70.0px;font-size:12.3px;color:#151515;font-weight:bold;letter-spacing:0.531px;-webkit-text-stroke:.25px #151515;">V МЕЖДУНАРОДНАЯ ЗИМНЯЯ ОНЛАЙН-ШКОЛА</div>
<div class="t" style="left:82.3px;top:84.0px;font-size:12.3px;color:#151515;font-weight:bold;letter-spacing:0.361px;-webkit-text-stroke:.25px #151515;">«СОРТИРОВКА И УТИЛИЗАЦИЯ ТВЕРДЫХ ОТХОДОВ»</div>
<div class="t" style="left:68.1px;top:99.0px;font-size:12.9px;color:#2a2a2a;transform:scaleX(0.9525);transform-origin:0 50%;">(В преддверии Международного дня безотходного производства)</div>
<div class="t" style="left:194.9px;top:114.0px;font-size:12.9px;color:#2a2a2a;transform:scaleX(0.9172);transform-origin:0 50%;">26 февраля - 4 марта</div>
<div class="t" style="left:56.3px;top:150.0px;font-size:28.6px;color:#0c0c0c;font-weight:bold;font-family:'DejaVu Sans',sans-serif;letter-spacing:-0.470px;-webkit-text-stroke:.55px #0c0c0c;">Загрязнение почв, вод и</div>
<div class="t" style="left:80.1px;top:186.0px;font-size:28.6px;color:#0c0c0c;font-weight:bold;font-family:'DejaVu Sans',sans-serif;letter-spacing:-0.569px;-webkit-text-stroke:.55px #0c0c0c;">атмосферы отходами</div>
<div class="t" style="left:310.1px;top:234.0px;font-size:12.2px;color:#151515;font-weight:bold;letter-spacing:0.380px;">Докладчик:</div>
<div class="t" style="left:310.1px;top:248.0px;font-size:12.2px;color:#2a2a2a;letter-spacing:0.427px;">Зубова Ольга Александровна,</div>
<div class="t" style="left:310.1px;top:261.0px;font-size:12.2px;color:#2a2a2a;letter-spacing:0.509px;">к.т.н., старший преподаватель</div>
<div class="t" style="left:472.2px;top:276.0px;font-size:4.6px;color:#333;font-weight:bold;transform:scaleX(1.1310);transform-origin:0 50%;">NotebookLM</div>
<div style="position:absolute;left:468.7px;top:275.3px;width:2.6px;height:3.2px;background:#555;border-radius:1px"></div></div>
<div style="position:absolute;left:147.3px;top:256.6px;width:70.3px;height:39.5px;background:#2b3038;overflow:hidden;border-radius:2px;"><div style="position:absolute;left:30.5px;top:15.4px;width:9.4px;height:9.4px;background:#23272d;border-radius:50%"></div><div style="position:absolute;left:33.5px;top:17.6px;width:9.4px;height:9.4px;background:#23272d;border-radius:50%"></div><div style="position:absolute;left:14.2px;top:23.8px;width:9.8px;height:9.8px;background:#23272d;border-radius:50%"></div><div style="position:absolute;left:35.7px;top:24.2px;width:11.0px;height:11.0px;background:#23272d;border-radius:50%"></div><div style="position:absolute;left:32.7px;top:17.6px;width:5.0px;height:5.0px;background:#c96a2e;border-radius:50%"></div><div style="position:absolute;left:35.7px;top:19.8px;width:5.0px;height:5.0px;background:#c96a2e;border-radius:50%"></div><div style="position:absolute;left:16.4px;top:26.0px;width:5.4px;height:5.4px;background:#c96a2e;border-radius:50%"></div><div style="position:absolute;left:37.9px;top:26.4px;width:6.6px;height:6.6px;background:#c96a2e;border-radius:50%"></div><div class="t" style="left:4.2px;top:5.0px;font-size:2.5px;color:#f0f0f0;font-weight:bold;">Масштаб проблемы: 500 миллионов тонн</div><div class="t" style="left:4.2px;top:8.0px;font-size:2.5px;color:#f0f0f0;font-weight:bold;">накопленных отходов</div><div style="position:absolute;left:4.2px;top:11.5px;width:40px;height:0.7px;background:#555c64;"></div><div style="position:absolute;left:4.2px;top:13px;width:30px;height:0.7px;background:#4c535b;"></div><div style="position:absolute;left:4.5px;top:20.6px;width:9px;height:0.7px;background:#5f666e;"></div><div style="position:absolute;left:4.5px;top:31.4px;width:9px;height:0.7px;background:#5f666e;"></div><div style="position:absolute;left:52px;top:15.7px;width:14px;height:0.7px;background:#5f666e;"></div><div style="position:absolute;left:52px;top:23.3px;width:14px;height:0.7px;background:#5f666e;"></div><div style="position:absolute;left:52px;top:30.2px;width:14px;height:0.7px;background:#5f666e;"></div></div>
<div style="position:absolute;left:147.3px;top:308.4px;width:70.3px;height:39.5px;background:#f8f7f3;overflow:hidden;border-radius:2px;box-shadow:0 0 0 .6px #d6d6d6"><div class="t" style="left:4.0px;top:3.0px;font-size:2.8px;color:#151515;font-weight:bold;">Из чего состоит эта миллионы тонн:</div><div style="position:absolute;left:4px;top:7.5px;width:34px;height:0.6px;background:#b0b0b0;"></div><div style="position:absolute;left:3.7px;top:12.2px;width:23px;height:22px;background:#9b5b2a;"></div><div style="position:absolute;left:27.7px;top:24.1px;width:13px;height:10.1px;background:#1b88da;"></div><div style="position:absolute;left:27.7px;top:12.2px;width:26px;height:11.3px;background:#f1efea;"></div><div style="position:absolute;left:41.7px;top:24.1px;width:11.5px;height:5.2px;background:#a8977f;"></div><div style="position:absolute;left:41.7px;top:29.7px;width:11.5px;height:4.5px;background:#b9a17e;"></div><div style="position:absolute;left:53.8px;top:12.2px;width:5.2px;height:5.4px;background:#dcc09a;"></div><div style="position:absolute;left:53.8px;top:17.8px;width:5.2px;height:4px;background:#c9aa7c;"></div><div style="position:absolute;left:53.8px;top:22px;width:5.2px;height:3.3px;background:#e6d8c0;"></div><div style="position:absolute;left:53.8px;top:25.5px;width:5.2px;height:2.8px;background:#1e1e1e;"></div><div style="position:absolute;left:53.8px;top:28.5px;width:5.2px;height:2.7px;background:#9a9a9a;"></div><div style="position:absolute;left:53.8px;top:31.4px;width:5.2px;height:2.8px;background:#bdbdbd;"></div><div style="position:absolute;left:60px;top:21.5px;width:5px;height:0.6px;background:#999;"></div><div style="position:absolute;left:60px;top:24.3px;width:5px;height:0.6px;background:#999;"></div><div style="position:absolute;left:60px;top:27.1px;width:5px;height:0.6px;background:#999;"></div><div style="position:absolute;left:60px;top:29.9px;width:5px;height:0.6px;background:#999;"></div><div style="position:absolute;left:60px;top:32.7px;width:5px;height:0.6px;background:#999;"></div></div>
<div style="position:absolute;left:147.3px;top:359.7px;width:70.3px;height:39.5px;background:#f9f8f5;overflow:hidden;border-radius:2px;box-shadow:0 0 0 .6px #d0d0d0"><div class="t" style="left:4.0px;top:4.0px;font-size:2.7px;color:#151515;font-weight:bold;">Влияние неправильной</div><div class="t" style="left:4.0px;top:8.0px;font-size:2.7px;color:#151515;font-weight:bold;">кома мусора порождает нас</div><div style="position:absolute;left:4px;top:11.5px;width:36px;height:0.6px;background:#b0b0b0;"></div><div style="position:absolute;left:4px;top:25px;width:19px;height:1.3px;background:#d9c2a2;"></div><div style="position:absolute;left:4px;top:28.3px;width:8px;height:0.7px;background:#666;"></div><div style="position:absolute;left:4px;top:30px;width:14px;height:0.5px;background:#aaa;"></div><div style="position:absolute;left:4px;top:31.3px;width:12px;height:0.5px;background:#aaa;"></div><div style="position:absolute;left:4px;top:32.6px;width:13px;height:0.5px;background:#aaa;"></div><div style="position:absolute;left:25px;top:25px;width:21px;height:1.3px;background:#d9c2a2;"></div><div style="position:absolute;left:25px;top:28.3px;width:8px;height:0.7px;background:#666;"></div><div style="position:absolute;left:25px;top:30px;width:14px;height:0.5px;background:#aaa;"></div><div style="position:absolute;left:25px;top:31.3px;width:12px;height:0.5px;background:#aaa;"></div><div style="position:absolute;left:25px;top:32.6px;width:13px;height:0.5px;background:#aaa;"></div><div style="position:absolute;left:48px;top:25px;width:18px;height:1.3px;background:#d9c2a2;"></div><div style="position:absolute;left:48px;top:28.3px;width:8px;height:0.7px;background:#666;"></div><div style="position:absolute;left:48px;top:30px;width:14px;height:0.5px;background:#aaa;"></div><div style="position:absolute;left:48px;top:31.3px;width:12px;height:0.5px;background:#aaa;"></div><div style="position:absolute;left:48px;top:32.6px;width:13px;height:0.5px;background:#aaa;"></div><div style="position:absolute;left:5px;top:20.2px;width:2.2px;height:2.8px;background:#4a4a4a;border-radius:.5px"></div><div style="position:absolute;left:8.5px;top:20.2px;width:2.2px;height:2.8px;background:#4a4a4a;border-radius:.5px"></div><div style="position:absolute;left:12px;top:20.2px;width:2.2px;height:2.8px;background:#4a4a4a;border-radius:.5px"></div><div style="position:absolute;left:26px;top:20.2px;width:2.2px;height:2.8px;background:#4a4a4a;border-radius:.5px"></div><div style="position:absolute;left:29.5px;top:20.2px;width:2.2px;height:2.8px;background:#4a4a4a;border-radius:.5px"></div><div style="position:absolute;left:33px;top:20.2px;width:2.2px;height:2.8px;background:#4a4a4a;border-radius:.5px"></div><div style="position:absolute;left:36.5px;top:20.2px;width:2.2px;height:2.8px;background:#4a4a4a;border-radius:.5px"></div><div style="position:absolute;left:49px;top:20.2px;width:2.2px;height:2.8px;background:#4a4a4a;border-radius:.5px"></div><div style="position:absolute;left:52.5px;top:20.2px;width:2.2px;height:2.8px;background:#4a4a4a;border-radius:.5px"></div><div style="position:absolute;left:56px;top:20.2px;width:2.2px;height:2.8px;background:#4a4a4a;border-radius:.5px"></div><div style="position:absolute;left:59.5px;top:20.2px;width:2.2px;height:2.8px;background:#4a4a4a;border-radius:.5px"></div></div>
<div style="position:absolute;left:147.3px;top:411px;width:70.3px;height:39.5px;background:#98a62e;overflow:hidden;border-radius:2px;"><div style="position:absolute;left:0px;top:0px;width:70.3px;height:14px;background:linear-gradient(180deg,#aebfc6,#c5cfd0);"></div><svg style="position:absolute;left:0;top:0" width="70.3" height="39.5" viewBox="0 0 70.3 39.5"><path d="M0 9 L8 5 L16 9 L24 13 L30 17 L36 18 L44 14 L52 7 L58 5 L66 8 L70.300 7 V28 H0Z" fill="#6f705c"/><path d="M0 14 L10 10 L20 16 L28 21 L0 24Z" fill="#5c5d48"/><path d="M44 16 L54 9 L62 11 L70.300 10 V24 H40Z" fill="#7c7b62"/><path d="M0 24 C15 20 25 19 36 20 C48 21 60 20 70.300 19 V39.500 H0Z" fill="#8c9a34"/><path d="M0 30 C20 27 50 27 70.300 29 V39.500 H0Z" fill="#a3ae2c"/></svg><div class="t" style="left:4.0px;top:24.0px;font-size:3.4px;color:#fff;font-weight:bold;">Стихийные свалки:</div><div class="t" style="left:4.0px;top:28.0px;font-size:3.4px;color:#fff;font-weight:bold;">это не просто горы мусора...</div><div style="position:absolute;left:4px;top:32.5px;width:40px;height:0.6px;background:#d8e0a0;"></div><div style="position:absolute;left:4px;top:34px;width:34px;height:0.6px;background:#d8e0a0;"></div></div>
<div style="position:absolute;left:147.3px;top:462px;width:70.3px;height:39.5px;background:#262b33;overflow:hidden;border-radius:2px;"><div class="t" style="left:4.0px;top:4.0px;font-size:3.3px;color:#f2c230;font-weight:bold;">Скрытая угроза в бытовом потоке</div><div style="position:absolute;left:4px;top:8.5px;width:54px;height:0.6px;background:#aab0b8;"></div><div style="position:absolute;left:4px;top:10px;width:50px;height:0.6px;background:#aab0b8;"></div><div style="position:absolute;left:4px;top:12.5px;width:20px;height:0.6px;background:#d0d4d8;"></div><div style="position:absolute;left:13px;top:16.8px;width:1.4px;height:1.4px;background:#f2c230;border-radius:50%"></div><div style="position:absolute;left:31px;top:16.8px;width:1.4px;height:1.4px;background:#f2c230;border-radius:50%"></div><div style="position:absolute;left:49px;top:16.8px;width:1.4px;height:1.4px;background:#f2c230;border-radius:50%"></div></div>
<svg style="position:absolute;left:231.5px;top:197.2px;" width="7" height="5" viewBox="0 0 7 5"><path d="M3.500 .8 L6.200 4.200 H.8Z" fill="#555"/></svg>
<div style="position:absolute;left:232.6px;top:203.7px;width:4px;height:114.5px;background:#7a7a7a;border-radius:2px"></div>
<svg style="position:absolute;left:838.5px;top:197.2px;" width="7" height="5" viewBox="0 0 7 5"><path d="M3.500 .8 L6.200 4.200 H.8Z" fill="#555"/></svg>
<div style="position:absolute;left:839.8px;top:204.5px;width:3.8px;height:15.5px;background:#6a6a6a;border-radius:2px"></div>
<svg style="position:absolute;left:838.5px;top:448.5px;" width="7" height="5" viewBox="0 0 7 5"><path d="M3.500 4.200 L6.200 .8 H.8Z" fill="#777"/></svg>
<svg style="position:absolute;left:838.5px;top:455.5px;" width="7" height="8" viewBox="0 0 7 8"><path d="M3.500 .5 L6.200 3.500 H.8Z M3.500 3.800 L6.200 6.800 H.8Z" fill="#777"/></svg>
<svg style="position:absolute;left:838.5px;top:465.5px;" width="7" height="8" viewBox="0 0 7 8"><path d="M3.500 7 L6.200 4 H.8Z M3.500 3.700 L6.200 .7 H.8Z" fill="#777"/></svg><div style="position:absolute;left:0px;top:480px;width:974px;height:37.6px;background:#000;"></div>
<svg style="position:absolute;left:26px;top:485.5px;" width="15" height="17" viewBox="0 0 15 17"><rect x="5" y="1" width="5" height="9.500" rx="2.500" fill="none" stroke="#f2f2f2" stroke-width="1.100"/><path d="M2.600 7.500 V8 A4.900 4.900 0 0 0 12.400 8 V7.500 M7.500 13 V15.800 M4.800 15.800 H10.200" fill="none" stroke="#f2f2f2" stroke-width="1.100"/></svg>
<svg style="position:absolute;left:49.5px;top:491.5px;" width="7" height="5" viewBox="0 0 7 5"><path d="M1 3.900 L3.500 1.300 L6 3.900" fill="none" stroke="#e8e8e8" stroke-width="1.100"/></svg>
<div class="t" style="left:25.0px;top:506.0px;font-size:8.0px;color:#f4f4f4;font-weight:bold;transform:scaleX(0.9129);transform-origin:0 50%;">Звук</div>
<svg style="position:absolute;left:84px;top:489px;" width="17" height="11" viewBox="0 0 17 11"><rect x=".8" y="1" width="10.400" height="9" rx="2" fill="none" stroke="#f2f2f2" stroke-width="1.100"/><path d="M11.200 4.400 L15.800 1.800 V9.200 L11.200 6.600" fill="none" stroke="#f2f2f2" stroke-width="1.100" stroke-linejoin="round"/></svg>
<svg style="position:absolute;left:112.0px;top:491.5px;" width="7" height="5" viewBox="0 0 7 5"><path d="M1 3.900 L3.500 1.300 L6 3.900" fill="none" stroke="#e8e8e8" stroke-width="1.100"/></svg>
<div class="t" style="left:81.4px;top:506.0px;font-size:8.0px;color:#f4f4f4;font-weight:bold;transform:scaleX(0.9000);transform-origin:0 50%;">Видео</div>
<svg style="position:absolute;left:305px;top:487.5px;" width="15" height="14" viewBox="0 0 15 14"><circle cx="5" cy="3.200" r="2" fill="none" stroke="#f2f2f2" stroke-width="1.050"/><rect x="1.200" y="7.300" width="7.600" height="5.200" rx="2.500" fill="none" stroke="#f2f2f2" stroke-width="1.050"/><circle cx="10.400" cy="5.800" r="1.700" fill="none" stroke="#f2f2f2" stroke-width="1"/><path d="M9.200 9.300 H11.200 A2 2 0 0 1 13.200 11.200 A1.600 1.600 0 0 1 11.600 12.500 H9.600" fill="none" stroke="#f2f2f2" stroke-width="1"/></svg>
<div class="t" style="left:323.4px;top:491.0px;font-size:6.48px;color:#d0d0d0;letter-spacing:-0.208px;">10</div>
<svg style="position:absolute;left:341.7px;top:491.5px;" width="7" height="5" viewBox="0 0 7 5"><path d="M1 3.900 L3.500 1.300 L6 3.900" fill="none" stroke="#e8e8e8" stroke-width="1.100"/></svg>
<div class="t" style="left:293.6px;top:506.0px;font-size:8.0px;color:#f4f4f4;font-weight:bold;transform:scaleX(0.9049);transform-origin:0 50%;">Участники</div>
<svg style="position:absolute;left:374px;top:487px;" width="16" height="15" viewBox="0 0 16 15"><path d="M6.200 2.800 A5 4.600 0 1 1 12.600 9.600" fill="none" stroke="#f2f2f2" stroke-width="1.050"/><path d="M6.400 3.600 A5 4.600 0 1 1 4.600 12.300 L2.400 14 L2.800 11.400 A5 4.600 0 0 1 6.400 3.600Z" fill="none" stroke="#f2f2f2" stroke-width="1.050" stroke-linejoin="round"/><circle cx="4.200" cy="8.200" r=".75" fill="#f2f2f2"/><circle cx="6.400" cy="8.200" r=".75" fill="#f2f2f2"/><circle cx="8.600" cy="8.200" r=".75" fill="#f2f2f2"/></svg>
<svg style="position:absolute;left:398.5px;top:491.5px;" width="7" height="5" viewBox="0 0 7 5"><path d="M1 3.900 L3.500 1.300 L6 3.900" fill="none" stroke="#e8e8e8" stroke-width="1.100"/></svg>
<div class="t" style="left:376.0px;top:506.0px;font-size:8.0px;color:#f4f4f4;font-weight:bold;transform:scaleX(0.8578);transform-origin:0 50%;">Чат</div>
<svg style="position:absolute;left:433.5px;top:487.5px;" width="17" height="14" viewBox="0 0 17 14"><path d="M8.500 12.800 C4 9.600 1 7 1 4.400 A3.400 3.400 0 0 1 4.400 1 C6.200 1 7.600 2 8.500 3.400 C9.400 2 10.800 1 12.600 1 A3.400 3.400 0 0 1 16 4.400 C16 7 13 9.600 8.500 12.800Z" fill="none" stroke="#f2f2f2" stroke-width="1.100"/></svg>
<div class="t" style="left:416.3px;top:506.0px;font-size:8.0px;color:#f4f4f4;font-weight:bold;transform:scaleX(0.8776);transform-origin:0 50%;">Отреагировать</div>
<div style="position:absolute;left:498px;top:488px;width:14.6px;height:12.4px;background:#23db8e;border-radius:2.500px"></div>
<svg style="position:absolute;left:501.3px;top:490.2px;" width="8" height="8" viewBox="0 0 8 8"><path d="M4 7.400 V1.800 M1.300 4.300 L4 1.500 L6.700 4.300" fill="none" stroke="#04140c" stroke-width="1.700" stroke-linejoin="miter"/></svg>
<div class="t" style="left:484.3px;top:506.0px;font-size:8.0px;color:#f4f4f4;font-weight:bold;transform:scaleX(0.8769);transform-origin:0 50%;">Поделиться</div>
<svg style="position:absolute;left:557.5px;top:486.5px;" width="17" height="16" viewBox="0 0 17 16"><path d="M7 2.400 C7.600 6.200 9 7.600 12.800 8.200 C9 8.800 7.600 10.200 7 14 C6.400 10.200 5 8.800 1.200 8.200 C5 7.600 6.400 6.200 7 2.400Z" fill="#e8f2ff"/><path d="M13 .8 C13.300 2.500 13.900 3.100 15.600 3.400 C13.900 3.700 13.300 4.300 13 6 C12.700 4.300 12.100 3.700 10.400 3.400 C12.100 3.100 12.700 2.500 13 .8Z" fill="#e8f2ff"/></svg>
<div class="t" style="left:541.8px;top:506.0px;font-size:8.0px;color:#f4f4f4;font-weight:bold;transform:scaleX(0.9074);transform-origin:0 50%;">AI Companion</div>
<svg style="position:absolute;left:617px;top:487px;" width="15" height="15" viewBox="0 0 15 15"><path d="M1 5 V3.400 A2.400 2.400 0 0 1 3.400 1 H5 M1 10 V11.600 A2.400 2.400 0 0 0 3.400 14 H5 M10 14 H11.600 A2.400 2.400 0 0 0 14 11.600 V10" fill="none" stroke="#f2f2f2" stroke-width="1.100"/><circle cx="11.400" cy="3.600" r="2.400" fill="none" stroke="#f2f2f2" stroke-width="1.100"/><circle cx="4" cy="7.600" r="1.700" fill="none" stroke="#f2f2f2" stroke-width="1"/></svg>
<div class="t" style="left:601.4px;top:506.0px;font-size:8.0px;color:#f4f4f4;font-weight:bold;transform:scaleX(0.9287);transform-origin:0 50%;">Приложения</div>
<div style="position:absolute;left:670.7px;top:487.3px;width:14.4px;height:14.4px;background:transparent;border-radius:50%;border:1.200px solid #f2f2f2"></div>
<div style="position:absolute;left:675px;top:491.6px;width:5.8px;height:5.8px;background:#f2f2f2;border-radius:50%"></div>
<div class="t" style="left:665.6px;top:506.0px;font-size:8.0px;color:#f4f4f4;font-weight:bold;transform:scaleX(0.8713);transform-origin:0 50%;">Запись</div>
<div style="position:absolute;left:729.5px;top:487.3px;width:14.4px;height:14.4px;background:transparent;border-radius:50%;border:1.200px solid #f2f2f2"></div>
<div style="position:absolute;left:732.7px;top:493.7px;width:1.7px;height:1.7px;background:#f2f2f2;border-radius:50%"></div>
<div style="position:absolute;left:735.8000000000001px;top:493.7px;width:1.7px;height:1.7px;background:#f2f2f2;border-radius:50%"></div>
<div style="position:absolute;left:738.9000000000001px;top:493.7px;width:1.7px;height:1.7px;background:#f2f2f2;border-radius:50%"></div>
<div class="t" style="left:708.4px;top:506.0px;font-size:8.0px;color:#f4f4f4;font-weight:bold;transform:scaleX(0.8967);transform-origin:0 50%;">Дополнительно</div>
<svg style="position:absolute;left:935px;top:486px;" width="17" height="17" viewBox="0 0 17 17"><path d="M8.500 1 H14.800 V15 H11" fill="none" stroke="#e3245c" stroke-width="1.300"/><path d="M11.200 1.600 V13.600 L14.600 15" fill="none" stroke="#e3245c" stroke-width="1"/><circle cx="7" cy="3.200" r="1.700" fill="none" stroke="#f4f4f4" stroke-width="1"/><path d="M4.200 8.600 L5.200 5.800 L8 5.600 L10.200 8 M5.400 6 L6 10 L3.400 14.600 M6 10 L8.600 11.400 L9 14.800 M2.200 7.400 L4.600 6" fill="none" stroke="#f4f4f4" stroke-width="1.200" stroke-linecap="round" stroke-linejoin="round"/></svg>
<div class="t" style="left:932.0px;top:506.0px;font-size:8.0px;color:#f4f4f4;font-weight:bold;transform:scaleX(0.8231);transform-origin:0 50%;">Выйти</div><div style="position:absolute;left:0px;top:517.6px;width:974px;height:30.4px;background:#1e1f21;"></div>
<svg style="position:absolute;left:12px;top:525px;" width="17" height="16" viewBox="0 0 17 16"><ellipse cx="9" cy="5.600" rx="4.600" ry="3.800" fill="#dfe9f6"/><ellipse cx="5" cy="7.800" rx="3.800" ry="3" fill="#cfdcf0"/><ellipse cx="12.400" cy="8" rx="4" ry="3" fill="#b9cdea"/><rect x="3" y="7" width="11" height="4" fill="#c8d8ee"/><path d="M5 12 L4.200 14.600 M8 12 L7.200 14.600" stroke="#4aa0e8" stroke-width="1"/><path d="M11.400 11.400 V15 M9.800 12.300 L13 14.100 M13 12.300 L9.800 14.100" stroke="#5ab0f0" stroke-width=".8"/></svg>
<div class="t" style="left:32.6px;top:526.0px;font-size:6.75px;color:#f2f2f2;letter-spacing:-0.164px;">1°C</div>
<div class="t" style="left:32.6px;top:534.0px;font-size:8.12px;color:#cfcfcf;letter-spacing:-0.116px;">Light rain/snow</div>
<div style="position:absolute;left:283.3px;top:526px;width:6.8px;height:6.6px;background:linear-gradient(135deg,#5fd0ff,#1f9ee6);"></div>
<div style="position:absolute;left:290.7px;top:526px;width:6.8px;height:6.6px;background:linear-gradient(135deg,#5fd0ff,#1f9ee6);"></div>
<div style="position:absolute;left:283.3px;top:533.2px;width:6.8px;height:6.6px;background:linear-gradient(135deg,#5fd0ff,#1f9ee6);"></div>
<div style="position:absolute;left:290.7px;top:533.2px;width:6.8px;height:6.6px;background:linear-gradient(135deg,#5fd0ff,#1f9ee6);"></div>
<div style="position:absolute;left:306px;top:523px;width:139.3px;height:19.8px;background:#35373b;border-radius:10px;border:.6px solid #46484c"></div>
<svg style="position:absolute;left:312.5px;top:527.5px;" width="11" height="11" viewBox="0 0 11 11"><circle cx="4.600" cy="4.600" r="3.300" fill="none" stroke="#f0f0f0" stroke-width="1.200"/><path d="M7 7 L9.800 9.800" stroke="#f0f0f0" stroke-width="1.300"/></svg>
<div class="t" style="left:329.5px;top:530.0px;font-size:9.11px;color:#dcdcdc;letter-spacing:-0.186px;">Поиск</div>
<svg style="position:absolute;left:412.5px;top:524px" width="28.5" height="17.500" viewBox="0 0 28.5 17.5"><defs><clipPath id="sp"><path d="M3 3 C8 -1 20 -1 26 2.500 C29 6 28.500 12 25 15.500 C18 18.500 8 18 2.500 14.500 C-.5 11 0 6 3 3Z"/></clipPath></defs><g clip-path="url(#sp)"><rect width="28.500" height="17.500" fill="#8ab6ea"/><rect y="0" width="28.500" height="6" fill="#a9b6ee"/><ellipse cx="19" cy="6" rx="8" ry="2.500" fill="#e9b6d6"/><rect y="9.500" width="28.500" height="8" fill="#3f86d8"/><path d="M2 9 C5 5 8 6 10 10 L12 15 L3 16Z" fill="#e88a3c"/><path d="M9 10 L18 9 L16 13 L10 14Z" fill="#d8dce6"/></g></svg>
<div style="position:absolute;left:448.4px;top:519.6px;width:25.6px;height:26.4px;background:#2d2f33;border-radius:3px"></div>
<div style="position:absolute;left:453.5px;top:524.5px;width:15.8px;height:15.4px;background:#0b5cff;border-radius:5.500px"></div>
<div class="t" style="left:456.3px;top:531.0px;font-size:4.6px;color:#fff;font-weight:bold;transform:scaleX(0.8743);transform-origin:0 50%;">zoom</div>
<div style="position:absolute;left:456.5px;top:543.3px;width:11px;height:1.8px;background:#dba4e2;border-radius:1px"></div>
<svg style="position:absolute;left:480.5px;top:525px" width="17" height="17" viewBox="0 0 17 17"><path d="M5.500 1.500 H10 C12 1.500 12.500 3 13 5 L14 9 H9 L7.500 4 C7 2.500 6.500 1.500 5.500 1.500Z" fill="#2fa8f0"/><path d="M5.500 1.500 C4 1.500 3.200 2.500 2.700 4.500 L1.500 9 C1 11.500 2 12.500 3.500 12.500 H6 L8 5.500 C7.500 3 7 1.500 5.500 1.500Z" fill="#2a6be0"/><path d="M11.500 15.500 H7 C5 15.500 4.500 14 4 12 L3 8 H8 L9.500 13 C10 14.500 10.500 15.500 11.500 15.500Z" fill="#f8a02c"/><path d="M11.500 15.500 C13 15.500 13.800 14.500 14.300 12.500 L15.500 8 C16 5.500 15 4.500 13.500 4.500 H11 L9 11.500 C9.500 14 10 15.500 11.500 15.500Z" fill="#e84a8a"/></svg>
<div style="position:absolute;left:509px;top:525.3px;width:15.4px;height:15.4px;background:radial-gradient(circle at 60% 65%,#7a3cf0 0,#8a3af0 32%,#ff5a2c 48%,#ff8a1c 70%,#ffc02c 100%);border-radius:50%"></div>
<div style="position:absolute;left:509.5px;top:523.8px;width:8px;height:7px;background:#ff7a1c;border-radius:60% 40% 10% 50%"></div>
<div style="position:absolute;left:536.7px;top:526.2px;width:8px;height:4px;background:#e9a71c;border-radius:1.500px 1.500px 0 0"></div>
<div style="position:absolute;left:536.7px;top:528px;width:16.7px;height:11.7px;background:linear-gradient(180deg,#ffd75a,#f6b92c);border-radius:1.500px"></div>
<div style="position:absolute;left:538.4px;top:536px;width:13.3px;height:3.7px;background:#2f8fe0;border-radius:0 0 1px 1px"></div>
<div style="position:absolute;left:565px;top:525.3px;width:15.4px;height:15.4px;background:conic-gradient(from 200deg,#1e6fd0 0,#2ba4e4 35%,#3dd6a8 62%,#58e06c 75%,#1a58b8 100%);border-radius:50%"></div>
<div style="position:absolute;left:569.5px;top:530.5px;width:8.5px;height:6.5px;background:#1d1f22;border-radius:50% 50% 50% 0;opacity:.0"></div>
<div style="position:absolute;left:570px;top:531px;width:7px;height:5.5px;background:#164ea8;border-radius:50%"></div>
<div style="position:absolute;left:599px;top:526.2px;width:5px;height:5px;background:#7b83eb;border-radius:50%"></div>
<div style="position:absolute;left:604.6px;top:527.6px;width:3.6px;height:3.6px;background:#5b62c8;border-radius:50%"></div>
<div style="position:absolute;left:597px;top:532px;width:10.5px;height:8px;background:#5d65cf;border-radius:1.500px 1.500px 3px 3px"></div>
<div style="position:absolute;left:603.5px;top:532.5px;width:6px;height:6.5px;background:#4a52b8;border-radius:1px 1px 3px 1px"></div>
<div style="position:absolute;left:592.8px;top:530.5px;width:8.4px;height:8.4px;background:#464eb8;border-radius:1.500px"></div>
<div class="t" style="left:594.8px;top:532.0px;font-size:7px;color:#fff;font-weight:bold;">T</div>
<div style="position:absolute;left:619.9px;top:525.3px;width:15.4px;height:15.4px;background:conic-gradient(from -60deg,#ea4335 0 120deg,#fbbc05 120deg 240deg,#34a853 240deg 360deg);border-radius:50%"></div>
<div style="position:absolute;left:623.7px;top:529.1px;width:7.8px;height:7.8px;background:#fff;border-radius:50%"></div>
<div style="position:absolute;left:624.7px;top:530.1px;width:5.8px;height:5.8px;background:#4285f4;border-radius:50%"></div>
<div style="position:absolute;left:630.5px;top:520.8px;width:9.4px;height:9.4px;background:#e8d8d0;border-radius:50%;border:.6px solid #f4f4f4"></div>
<div style="position:absolute;left:632.3px;top:521.3px;width:5.8px;height:4px;background:#2a2220;border-radius:50% 50% 30% 30%"></div>
<div style="position:absolute;left:633.3px;top:523.3px;width:3.8px;height:4px;background:#e8b8a0;border-radius:50%"></div>
<div style="position:absolute;left:625.5px;top:543.5px;width:4.5px;height:1.6px;background:#8e8e8e;border-radius:1px"></div>
<div style="position:absolute;left:654.5px;top:526px;width:9px;height:14.4px;background:#e8eef8;border-radius:1px"></div>
<div style="position:absolute;left:655.5px;top:528px;width:7px;height:1.3px;background:#2b7cd3;"></div><div style="position:absolute;left:655.5px;top:531px;width:7px;height:1.3px;background:#2b7cd3;"></div><div style="position:absolute;left:655.5px;top:534px;width:7px;height:1.3px;background:#185abd;"></div><div style="position:absolute;left:655.5px;top:537px;width:7px;height:1.3px;background:#103f91;"></div>
<div style="position:absolute;left:649.4px;top:528.8px;width:9.4px;height:9.4px;background:#1f5fc0;border-radius:1.200px"></div>
<div class="t" style="left:651.0px;top:531.0px;font-size:7.4px;color:#fff;font-weight:bold;">W</div>
<div style="position:absolute;left:654.4px;top:543.5px;width:4.5px;height:1.6px;background:#8e8e8e;border-radius:1px"></div>
<div style="position:absolute;left:678.4px;top:526.4px;width:12.2px;height:13.8px;background:#56b6e6;border-radius:1.200px"></div>
<div style="position:absolute;left:678.4px;top:526.4px;width:12.2px;height:2.6px;background:#2a7ab8;border-radius:1.200px 1.200px 0 0"></div>
<div style="position:absolute;left:680.4px;top:530.8px;width:8.2px;height:0.9px;background:#e4f4fc;"></div>
<div style="position:absolute;left:680.4px;top:533.0px;width:8.2px;height:0.9px;background:#e4f4fc;"></div>
<div style="position:absolute;left:680.4px;top:535.1999999999999px;width:8.2px;height:0.9px;background:#e4f4fc;"></div>
<div style="position:absolute;left:680.4px;top:537.4px;width:8.2px;height:0.9px;background:#e4f4fc;"></div>
<svg style="position:absolute;left:804.7px;top:530px;" width="8" height="6" viewBox="0 0 8 6"><path d="M1 4.800 L4 1.500 L7 4.800" fill="none" stroke="#f0f0f0" stroke-width="1.200"/></svg>
<svg style="position:absolute;left:823px;top:527px;" width="14" height="12" viewBox="0 0 14 12"><rect x="1.600" y=".800" width="3" height="5.200" rx="1.500" fill="#c79ad6"/><path d="M.6 4.600 A2.500 2.500 0 0 0 5.600 4.600 M3.100 7.200 V9" fill="none" stroke="#c79ad6" stroke-width=".8"/><path d="M13 3.400 L6.800 6.800 L10.600 7.800 L11.400 11.400Z" fill="none" stroke="#c79ad6" stroke-width=".9" stroke-linejoin="round"/></svg>
<div class="t" style="left:846.0px;top:530.0px;font-size:7.55px;color:#f0f0f0;letter-spacing:-0.205px;">ҚАЗ</div>
<svg style="position:absolute;left:872px;top:527.5px;" width="11" height="10" viewBox="0 0 11 10"><path d="M.8 3.600 A6.800 6.800 0 0 1 10.200 3.600" fill="none" stroke="#8a8a8a" stroke-width="1"/><path d="M2.400 5.400 A4.400 4.400 0 0 1 8.600 5.400" fill="none" stroke="#b8b8b8" stroke-width="1"/><path d="M4 7.100 A2.200 2.200 0 0 1 7 7.100" fill="none" stroke="#f0f0f0" stroke-width="1"/><circle cx="5.500" cy="8.800" r=".9" fill="#f0f0f0"/></svg>
<svg style="position:absolute;left:886.5px;top:528px;" width="11" height="10" viewBox="0 0 11 10"><path d="M.8 3.600 H2.800 L5.400 1.200 V8.800 L2.800 6.400 H.8Z" fill="none" stroke="#f0f0f0" stroke-width=".9" stroke-linejoin="round"/><path d="M6.800 3.400 A2.200 2.200 0 0 1 6.800 6.600 M8 2 A4.200 4.200 0 0 1 8 8 M9.300 .8 A6 6 0 0 1 9.300 9.200" fill="none" stroke="#f0f0f0" stroke-width=".8"/></svg>
<div style="position:absolute;left:902.4px;top:529.3px;width:11.6px;height:7px;background:transparent;border:1px solid #f0f0f0;border-radius:2.200px"></div>
<div style="position:absolute;left:914.2px;top:531.3px;width:1.2px;height:3px;background:#f0f0f0;border-radius:0 1px 1px 0"></div>
<div style="position:absolute;left:904px;top:530.9px;width:4.2px;height:3.8px;background:#f2c23a;border-radius:.8px"></div>
<div class="t" style="left:944.2px;top:526.0px;font-size:7.08px;color:#f2f2f2;letter-spacing:-0.129px;">10:31</div>
<div class="t" style="left:925.5px;top:534.0px;font-size:7.39px;color:#f2f2f2;letter-spacing:-0.121px;">03.03.2026</div></div>
</body></html>
